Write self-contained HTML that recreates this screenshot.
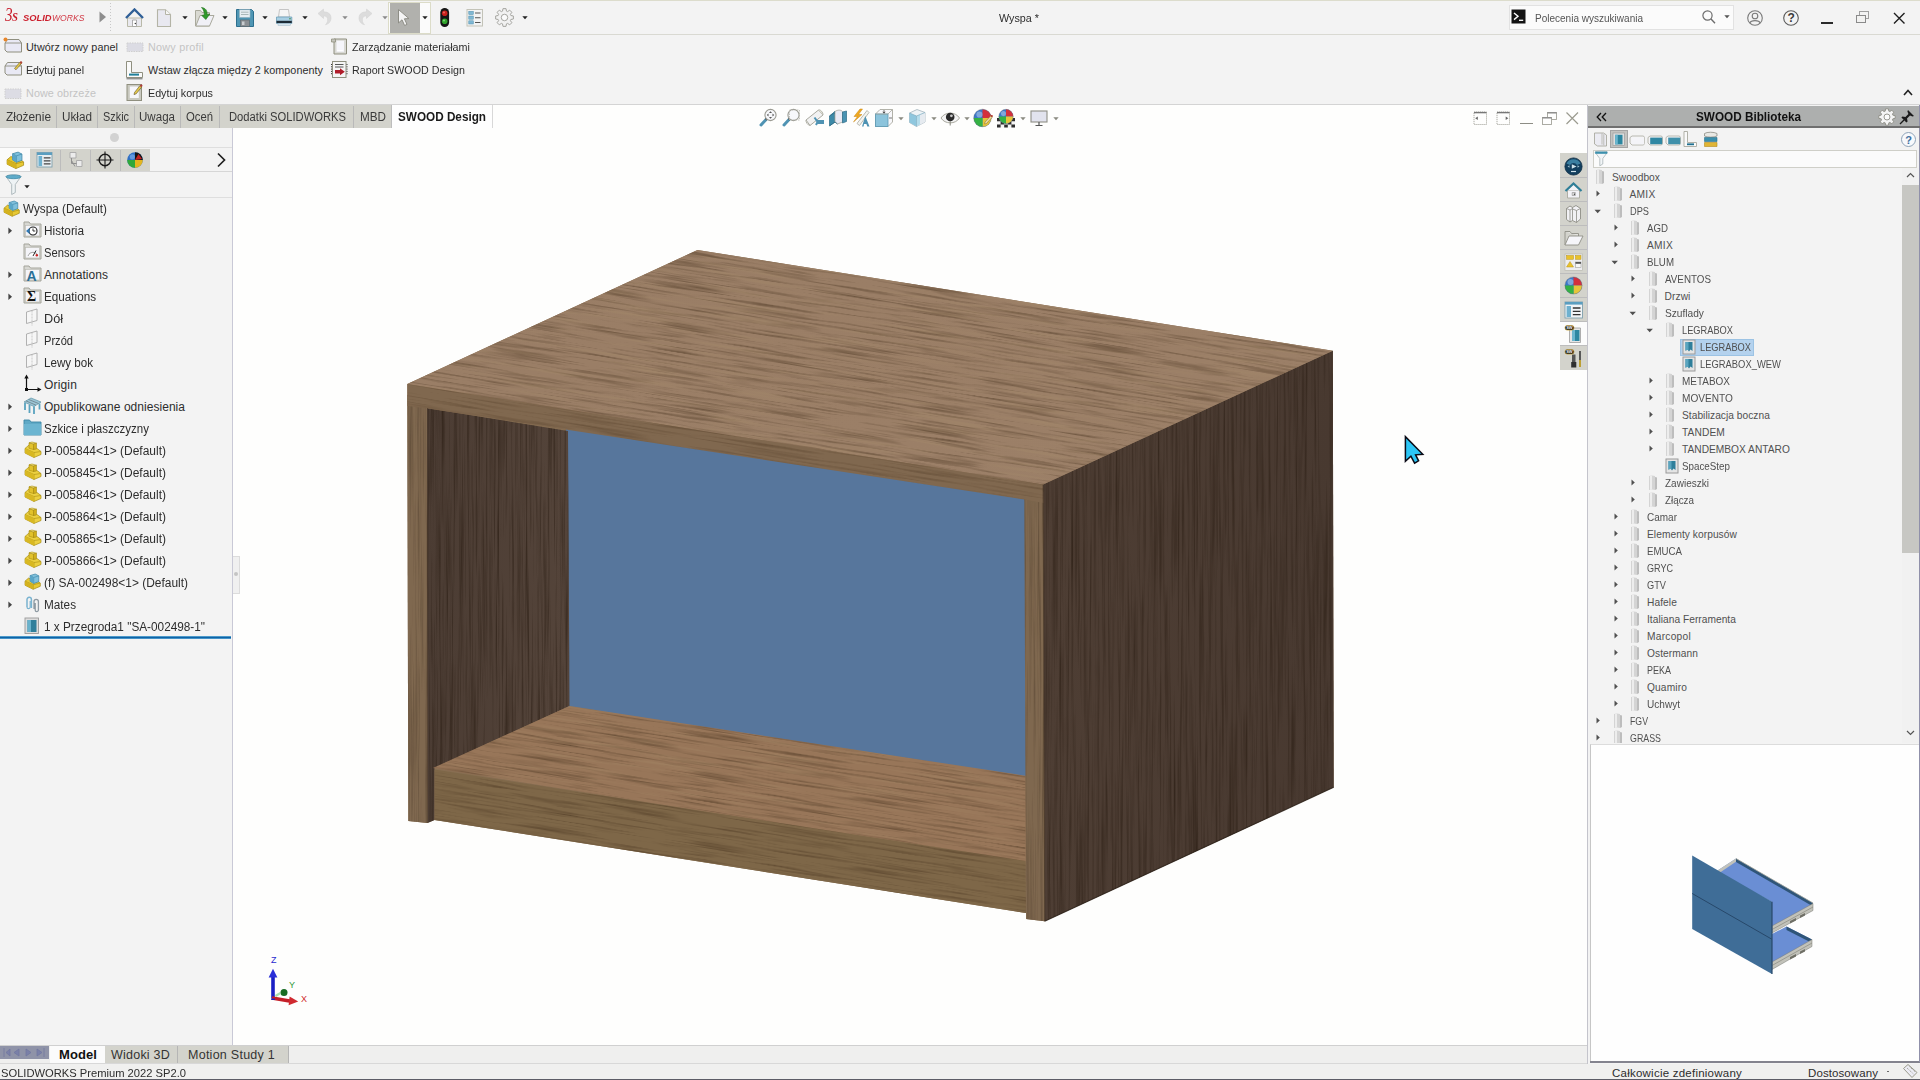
<!DOCTYPE html>
<html lang="pl"><head><meta charset="utf-8"><title>Wyspa - SOLIDWORKS Premium 2022</title><style>
html,body{margin:0;padding:0;}
body{width:1920px;height:1080px;overflow:hidden;position:relative;background:#fefefd;font-family:"Liberation Sans",sans-serif;}
.b{position:absolute;display:block;}
.t{position:absolute;white-space:nowrap;line-height:16px;height:16px;}
</style></head><body>
<div class="b" style="left:0px;top:0px;width:1920px;height:105px;background:#f3f3f3;"></div>
<div class="b" style="left:0px;top:34px;width:1920px;height:1px;background:#d9d9d2;"></div>
<div class="b" style="left:0px;top:0px;width:1920px;height:1px;background:#dcdccc;"></div>
<div class="b" style="left:0px;top:104px;width:1920px;height:1px;background:#d4d4d4;"></div>
<div class="b" style="left:0px;top:105px;width:391px;height:23px;background:#d3d3cc;"></div>
<div class="b" style="left:56px;top:106px;width:1px;height:22px;background:#b9b9b9;"></div>
<div class="b" style="left:97px;top:106px;width:1px;height:22px;background:#b9b9b9;"></div>
<div class="b" style="left:134px;top:106px;width:1px;height:22px;background:#b9b9b9;"></div>
<div class="b" style="left:180px;top:106px;width:1px;height:22px;background:#b9b9b9;"></div>
<div class="b" style="left:219px;top:106px;width:1px;height:22px;background:#b9b9b9;"></div>
<div class="b" style="left:353px;top:106px;width:1px;height:22px;background:#b9b9b9;"></div>
<div class="b" style="left:391px;top:105px;width:102px;height:23px;background:#fefefe;border-left:1px solid #bdbdbd;border-right:1px solid #d8d8d8;box-sizing:border-box;"></div>
<div class="b" style="left:0px;top:128px;width:232px;height:917px;background:#f3f3f3;"></div>
<div class="b" style="left:232px;top:128px;width:1px;height:917px;background:#c9c9d6;"></div>
<div class="b" style="left:0px;top:147px;width:232px;height:1px;background:#dedede;"></div>
<div class="b" style="left:0px;top:148px;width:30px;height:23px;background:#fbfbfb;"></div>
<div class="b" style="left:30px;top:149px;width:120px;height:22px;background:#d3d3cc;"></div>
<div class="b" style="left:60px;top:150px;width:1px;height:21px;background:#bcbcbc;"></div>
<div class="b" style="left:90px;top:150px;width:1px;height:21px;background:#bcbcbc;"></div>
<div class="b" style="left:120px;top:150px;width:1px;height:21px;background:#bcbcbc;"></div>
<div class="b" style="left:0px;top:171px;width:232px;height:1px;background:#d6d6d6;"></div>
<div class="b" style="left:0px;top:197px;width:232px;height:1px;background:#dedede;"></div>
<div class="b" style="left:0px;top:636.3px;width:231px;height:3.2px;background:linear-gradient(#8fd6f0,#0e62a6 32%,#0e62a6 68%,#7cc8ec);"></div>
<div class="b" style="left:110px;top:133px;width:9px;height:9px;background:#d2d2d2;border-radius:50%;"></div>
<div class="b" style="left:233px;top:556px;width:7px;height:38px;background:#f0f0f0;border:1px solid #dcdcdc;border-left:none;box-sizing:border-box;"></div>
<div class="b" style="left:234px;top:572px;width:4px;height:4px;background:#c4c4c4;border-radius:50%;"></div>
<div class="b" style="left:1587px;top:105px;width:333px;height:960px;background:#f3f3f3;"></div>
<div class="b" style="left:1587px;top:105px;width:1px;height:960px;background:#c4c4cc;"></div>
<div class="b" style="left:1588px;top:106px;width:332px;height:22px;background:#adafae;"></div>
<div class="b" style="left:1593px;top:149.5px;width:324px;height:18px;background:#fbfbfb;border:1px solid #cfcfc8;box-sizing:border-box;"></div>
<div class="b" style="left:1597px;top:168px;width:305px;height:575px;background:#f3f3f3;"></div>
<div class="b" style="left:1902px;top:168px;width:17px;height:575px;background:#f1f1f1;"></div>
<div class="b" style="left:1902px;top:185px;width:17px;height:368px;background:#c7c7c3;"></div>
<div class="b" style="left:1590px;top:744px;width:330px;height:318px;background:#fefefe;border-left:1px solid #c6c6c6;border-top:1px solid #dcdcdc;box-sizing:border-box;"></div>
<div class="b" style="left:1590px;top:1061px;width:330px;height:1.8px;background:#83838e;"></div>
<div class="b" style="left:1919px;top:105px;width:1px;height:957px;background:#9090aa;"></div>
<div class="b" style="left:1560px;top:153px;width:27px;height:217px;background:#d3d3cc;"></div>
<div class="b" style="left:1560px;top:177px;width:27px;height:1px;background:#bdbdbd;"></div>
<div class="b" style="left:1560px;top:201px;width:27px;height:1px;background:#bdbdbd;"></div>
<div class="b" style="left:1560px;top:225px;width:27px;height:1px;background:#bdbdbd;"></div>
<div class="b" style="left:1560px;top:249px;width:27px;height:1px;background:#bdbdbd;"></div>
<div class="b" style="left:1560px;top:273px;width:27px;height:1px;background:#bdbdbd;"></div>
<div class="b" style="left:1560px;top:297px;width:27px;height:1px;background:#bdbdbd;"></div>
<div class="b" style="left:1560px;top:321px;width:27px;height:1px;background:#bdbdbd;"></div>
<div class="b" style="left:1560px;top:345px;width:27px;height:1px;background:#bdbdbd;"></div>
<div class="b" style="left:1560px;top:322px;width:27px;height:23px;background:#fcfcfc;"></div>
<div class="b" style="left:0px;top:1045px;width:1587px;height:19px;background:#efefee;"></div>
<div class="b" style="left:0px;top:1045px;width:1587px;height:1px;background:#d0d0d0;"></div>
<div class="b" style="left:0px;top:1046px;width:49px;height:13px;background:#8f93a8;"></div>
<div class="b" style="left:50px;top:1046px;width:55px;height:18px;background:#fbfbfb;"></div>
<div class="b" style="left:105px;top:1046px;width:73px;height:17px;background:#d3d3cc;border-right:1px solid #b5b5b5;box-sizing:border-box;"></div>
<div class="b" style="left:178px;top:1046px;width:111px;height:17px;background:#d3d3cc;border-right:1px solid #b5b5b5;box-sizing:border-box;"></div>
<div class="b" style="left:0px;top:1064px;width:1920px;height:16px;background:#f0f0ef;"></div>
<div class="b" style="left:0px;top:1063px;width:1587px;height:1px;background:#d8d8d8;"></div>
<div class="b" style="left:0px;top:1079px;width:1920px;height:1px;background:#5c5c66;"></div>
<span class="t" style="left:999px;top:10px;font-size:11.5px;color:#2d2d2d;transform:scaleX(0.9364);transform-origin:0 50%;">Wyspa *</span>
<div class="b" style="left:1509px;top:5px;width:225px;height:25px;background:#fbfbfb;border:1px solid #e2e2e2;box-sizing:border-box;"></div>
<span class="t" style="left:1535px;top:10px;font-size:11px;color:#555;transform:scaleX(0.9105);transform-origin:0 50%;">Polecenia wyszukiwania</span>
<span class="t" style="left:26px;top:39px;font-size:10.8px;color:#2d2d2d;letter-spacing:0.045px;">Utwórz nowy panel</span>
<span class="t" style="left:26px;top:62px;font-size:10.8px;color:#2d2d2d;transform:scaleX(0.9758);transform-origin:0 50%;">Edytuj panel</span>
<span class="t" style="left:26px;top:85px;font-size:10.8px;color:#c4c4c4;letter-spacing:0.081px;">Nowe obrzeże</span>
<span class="t" style="left:148px;top:39px;font-size:10.8px;color:#c4c4c4;letter-spacing:0.235px;">Nowy profil</span>
<span class="t" style="left:148px;top:62px;font-size:10.8px;color:#2d2d2d;letter-spacing:0.029px;">Wstaw złącza między 2 komponenty</span>
<span class="t" style="left:148px;top:85px;font-size:10.8px;color:#2d2d2d;transform:scaleX(0.9934);transform-origin:0 50%;">Edytuj korpus</span>
<span class="t" style="left:352px;top:39px;font-size:10.8px;color:#2d2d2d;transform:scaleX(0.9980);transform-origin:0 50%;">Zarządzanie materiałami</span>
<span class="t" style="left:352px;top:62px;font-size:10.8px;color:#2d2d2d;transform:scaleX(0.9910);transform-origin:0 50%;">Raport SWOOD Design</span>
<span class="t" style="left:6px;top:108.6px;font-size:12px;color:#3a3a3a;transform:scaleX(0.9922);transform-origin:0 50%;">Złożenie</span>
<span class="t" style="left:62px;top:108.6px;font-size:12px;color:#3a3a3a;transform:scaleX(0.9779);transform-origin:0 50%;">Układ</span>
<span class="t" style="left:103px;top:108.6px;font-size:12px;color:#3a3a3a;transform:scaleX(0.9069);transform-origin:0 50%;">Szkic</span>
<span class="t" style="left:139px;top:108.6px;font-size:12px;color:#3a3a3a;transform:scaleX(0.9638);transform-origin:0 50%;">Uwaga</span>
<span class="t" style="left:186px;top:108.6px;font-size:12px;color:#3a3a3a;transform:scaleX(0.9414);transform-origin:0 50%;">Oceń</span>
<span class="t" style="left:229px;top:108.6px;font-size:12px;color:#3a3a3a;transform:scaleX(0.9333);transform-origin:0 50%;">Dodatki SOLIDWORKS</span>
<span class="t" style="left:360px;top:108.6px;font-size:12px;color:#3a3a3a;transform:scaleX(0.9750);transform-origin:0 50%;">MBD</span>
<span class="t" style="left:398px;top:108.6px;font-size:12px;color:#1a1a1a;transform:scaleX(0.9777);transform-origin:0 50%;font-weight:700;">SWOOD Design</span>
<span class="t" style="left:23px;top:200.5px;font-size:12px;color:#2d2d2d;transform:scaleX(0.9777);transform-origin:0 50%;">Wyspa (Default)</span>
<span class="t" style="left:44px;top:222.5px;font-size:12px;color:#2d2d2d;transform:scaleX(0.9834);transform-origin:0 50%;">Historia</span>
<span class="t" style="left:44px;top:244.5px;font-size:12px;color:#2d2d2d;transform:scaleX(0.9314);transform-origin:0 50%;">Sensors</span>
<span class="t" style="left:44px;top:266.5px;font-size:12px;color:#2d2d2d;letter-spacing:0.057px;">Annotations</span>
<span class="t" style="left:44px;top:288.5px;font-size:12px;color:#2d2d2d;transform:scaleX(0.9743);transform-origin:0 50%;">Equations</span>
<span class="t" style="left:44px;top:310.5px;font-size:12px;color:#2d2d2d;transform:scaleX(1.0552);transform-origin:0 50%;">Dół</span>
<span class="t" style="left:44px;top:332.5px;font-size:12px;color:#2d2d2d;transform:scaleX(0.9252);transform-origin:0 50%;">Przód</span>
<span class="t" style="left:44px;top:354.5px;font-size:12px;color:#2d2d2d;transform:scaleX(0.9666);transform-origin:0 50%;">Lewy bok</span>
<span class="t" style="left:44px;top:376.5px;font-size:12px;color:#2d2d2d;letter-spacing:0.165px;">Origin</span>
<span class="t" style="left:44px;top:398.5px;font-size:12px;color:#2d2d2d;letter-spacing:0.038px;">Opublikowane odniesienia</span>
<span class="t" style="left:44px;top:420.5px;font-size:12px;color:#2d2d2d;transform:scaleX(0.9601);transform-origin:0 50%;">Szkice i płaszczyzny</span>
<span class="t" style="left:44px;top:442.5px;font-size:12px;color:#2d2d2d;transform:scaleX(0.9994);transform-origin:0 50%;">P-005844&lt;1&gt; (Default)</span>
<span class="t" style="left:44px;top:464.5px;font-size:12px;color:#2d2d2d;transform:scaleX(0.9994);transform-origin:0 50%;">P-005845&lt;1&gt; (Default)</span>
<span class="t" style="left:44px;top:486.5px;font-size:12px;color:#2d2d2d;transform:scaleX(0.9994);transform-origin:0 50%;">P-005846&lt;1&gt; (Default)</span>
<span class="t" style="left:44px;top:508.5px;font-size:12px;color:#2d2d2d;transform:scaleX(0.9994);transform-origin:0 50%;">P-005864&lt;1&gt; (Default)</span>
<span class="t" style="left:44px;top:530.5px;font-size:12px;color:#2d2d2d;transform:scaleX(0.9994);transform-origin:0 50%;">P-005865&lt;1&gt; (Default)</span>
<span class="t" style="left:44px;top:552.5px;font-size:12px;color:#2d2d2d;transform:scaleX(0.9994);transform-origin:0 50%;">P-005866&lt;1&gt; (Default)</span>
<span class="t" style="left:44px;top:574.5px;font-size:12px;color:#2d2d2d;transform:scaleX(0.9949);transform-origin:0 50%;">(f) SA-002498&lt;1&gt; (Default)</span>
<span class="t" style="left:44px;top:596.5px;font-size:12px;color:#2d2d2d;transform:scaleX(0.9793);transform-origin:0 50%;">Mates</span>
<span class="t" style="left:44px;top:618.5px;font-size:12px;color:#2d2d2d;transform:scaleX(0.9821);transform-origin:0 50%;">1 x Przegroda1 "SA-002498-1"</span>
<span class="t" style="left:59px;top:1047.3px;font-size:13px;color:#111;letter-spacing:0.090px;font-weight:700;">Model</span>
<span class="t" style="left:111px;top:1047.3px;font-size:12.5px;color:#333;letter-spacing:0.227px;">Widoki 3D</span>
<span class="t" style="left:188px;top:1047.3px;font-size:12.5px;color:#333;letter-spacing:0.259px;">Motion Study 1</span>
<span class="t" style="left:1px;top:1064.7px;font-size:11.5px;color:#2d2d2d;transform:scaleX(0.9714);transform-origin:0 50%;">SOLIDWORKS Premium 2022 SP2.0</span>
<span class="t" style="left:1612px;top:1064.7px;font-size:11.5px;color:#2d2d2d;letter-spacing:0.233px;">Całkowicie zdefiniowany</span>
<span class="t" style="left:1808px;top:1064.7px;font-size:11.5px;color:#2d2d2d;letter-spacing:0.088px;">Dostosowany</span>
<span class="t" style="left:1696px;top:109px;font-size:12.5px;color:#111;transform:scaleX(0.9391);transform-origin:0 50%;font-weight:700;">SWOOD Biblioteka</span>
<div class="b" style="left:1590px;top:168px;width:312px;height:575px;overflow:hidden;">
<span class="t" style="left:22px;top:2px;font-size:10.2px;color:#505050;letter-spacing:0.046px;">Swoodbox</span>
<svg class="b" style="left:4px;top:1px;" width="12" height="16" viewBox="0 0 12 16"><path d="M2 1 L5 0.5 L8 1 L8 15 L5 14.5 L2 15 Z" fill="#d4d4d4"/><path d="M3 1 L5 0.5 L5 14.5 L3 15 Z" fill="#ededed"/><path d="M8 2 L10 2.5 L10 14 L8 15 Z" fill="#bdbdbd"/></svg>
<span class="t" style="left:39.5px;top:19px;font-size:10.2px;color:#505050;letter-spacing:0.266px;">AMIX</span>
<svg class="b" style="left:21.5px;top:18px;" width="12" height="16" viewBox="0 0 12 16"><path d="M2 1 L5 0.5 L8 1 L8 15 L5 14.5 L2 15 Z" fill="#d4d4d4"/><path d="M3 1 L5 0.5 L5 14.5 L3 15 Z" fill="#ededed"/><path d="M8 2 L10 2.5 L10 14 L8 15 Z" fill="#bdbdbd"/></svg>
<svg class="b" style="left:6px;top:22px;" width="5" height="8" viewBox="0 0 5 8"><path d="M0.5 0.5 L3.8 3.5 L0.5 6.5 Z" fill="#505050"/></svg>
<span class="t" style="left:39.5px;top:36px;font-size:10.2px;color:#505050;transform:scaleX(0.9059);transform-origin:0 50%;">DPS</span>
<svg class="b" style="left:21.5px;top:35px;" width="12" height="16" viewBox="0 0 12 16"><path d="M2 1 L5 0.5 L8 1 L8 15 L5 14.5 L2 15 Z" fill="#d4d4d4"/><path d="M3 1 L5 0.5 L5 14.5 L3 15 Z" fill="#ededed"/><path d="M8 2 L10 2.5 L10 14 L8 15 Z" fill="#bdbdbd"/></svg>
<svg class="b" style="left:3.5px;top:40.5px;" width="8" height="5" viewBox="0 0 8 5"><path d="M0.5 0.8 L6.9 0.8 L3.7 4.2 Z" fill="#505050"/></svg>
<span class="t" style="left:57px;top:53px;font-size:10.2px;color:#505050;transform:scaleX(0.9501);transform-origin:0 50%;">AGD</span>
<svg class="b" style="left:39px;top:52px;" width="12" height="16" viewBox="0 0 12 16"><path d="M2 1 L5 0.5 L8 1 L8 15 L5 14.5 L2 15 Z" fill="#d4d4d4"/><path d="M3 1 L5 0.5 L5 14.5 L3 15 Z" fill="#ededed"/><path d="M8 2 L10 2.5 L10 14 L8 15 Z" fill="#bdbdbd"/></svg>
<svg class="b" style="left:23.5px;top:56px;" width="5" height="8" viewBox="0 0 5 8"><path d="M0.5 0.5 L3.8 3.5 L0.5 6.5 Z" fill="#505050"/></svg>
<span class="t" style="left:57px;top:70px;font-size:10.2px;color:#505050;letter-spacing:0.266px;">AMIX</span>
<svg class="b" style="left:39px;top:69px;" width="12" height="16" viewBox="0 0 12 16"><path d="M2 1 L5 0.5 L8 1 L8 15 L5 14.5 L2 15 Z" fill="#d4d4d4"/><path d="M3 1 L5 0.5 L5 14.5 L3 15 Z" fill="#ededed"/><path d="M8 2 L10 2.5 L10 14 L8 15 Z" fill="#bdbdbd"/></svg>
<svg class="b" style="left:23.5px;top:73px;" width="5" height="8" viewBox="0 0 5 8"><path d="M0.5 0.5 L3.8 3.5 L0.5 6.5 Z" fill="#505050"/></svg>
<span class="t" style="left:57px;top:87px;font-size:10.2px;color:#505050;transform:scaleX(0.9528);transform-origin:0 50%;">BLUM</span>
<svg class="b" style="left:39px;top:86px;" width="12" height="16" viewBox="0 0 12 16"><path d="M2 1 L5 0.5 L8 1 L8 15 L5 14.5 L2 15 Z" fill="#d4d4d4"/><path d="M3 1 L5 0.5 L5 14.5 L3 15 Z" fill="#ededed"/><path d="M8 2 L10 2.5 L10 14 L8 15 Z" fill="#bdbdbd"/></svg>
<svg class="b" style="left:21px;top:91.5px;" width="8" height="5" viewBox="0 0 8 5"><path d="M0.5 0.8 L6.9 0.8 L3.7 4.2 Z" fill="#505050"/></svg>
<span class="t" style="left:74.5px;top:104px;font-size:10.2px;color:#505050;transform:scaleX(0.9623);transform-origin:0 50%;">AVENTOS</span>
<svg class="b" style="left:56.5px;top:103px;" width="12" height="16" viewBox="0 0 12 16"><path d="M2 1 L5 0.5 L8 1 L8 15 L5 14.5 L2 15 Z" fill="#d4d4d4"/><path d="M3 1 L5 0.5 L5 14.5 L3 15 Z" fill="#ededed"/><path d="M8 2 L10 2.5 L10 14 L8 15 Z" fill="#bdbdbd"/></svg>
<svg class="b" style="left:41px;top:107px;" width="5" height="8" viewBox="0 0 5 8"><path d="M0.5 0.5 L3.8 3.5 L0.5 6.5 Z" fill="#505050"/></svg>
<span class="t" style="left:74.5px;top:121px;font-size:10.2px;color:#505050;letter-spacing:0.101px;">Drzwi</span>
<svg class="b" style="left:56.5px;top:120px;" width="12" height="16" viewBox="0 0 12 16"><path d="M2 1 L5 0.5 L8 1 L8 15 L5 14.5 L2 15 Z" fill="#d4d4d4"/><path d="M3 1 L5 0.5 L5 14.5 L3 15 Z" fill="#ededed"/><path d="M8 2 L10 2.5 L10 14 L8 15 Z" fill="#bdbdbd"/></svg>
<svg class="b" style="left:41px;top:124px;" width="5" height="8" viewBox="0 0 5 8"><path d="M0.5 0.5 L3.8 3.5 L0.5 6.5 Z" fill="#505050"/></svg>
<span class="t" style="left:74.5px;top:138px;font-size:10.2px;color:#505050;transform:scaleX(0.9969);transform-origin:0 50%;">Szuflady</span>
<svg class="b" style="left:56.5px;top:137px;" width="12" height="16" viewBox="0 0 12 16"><path d="M2 1 L5 0.5 L8 1 L8 15 L5 14.5 L2 15 Z" fill="#d4d4d4"/><path d="M3 1 L5 0.5 L5 14.5 L3 15 Z" fill="#ededed"/><path d="M8 2 L10 2.5 L10 14 L8 15 Z" fill="#bdbdbd"/></svg>
<svg class="b" style="left:38.5px;top:142.5px;" width="8" height="5" viewBox="0 0 8 5"><path d="M0.5 0.8 L6.9 0.8 L3.7 4.2 Z" fill="#505050"/></svg>
<span class="t" style="left:92px;top:155px;font-size:10.2px;color:#505050;transform:scaleX(0.9088);transform-origin:0 50%;">LEGRABOX</span>
<svg class="b" style="left:74px;top:154px;" width="12" height="16" viewBox="0 0 12 16"><path d="M2 1 L5 0.5 L8 1 L8 15 L5 14.5 L2 15 Z" fill="#d4d4d4"/><path d="M3 1 L5 0.5 L5 14.5 L3 15 Z" fill="#ededed"/><path d="M8 2 L10 2.5 L10 14 L8 15 Z" fill="#bdbdbd"/></svg>
<svg class="b" style="left:56px;top:159.5px;" width="8" height="5" viewBox="0 0 8 5"><path d="M0.5 0.8 L6.9 0.8 L3.7 4.2 Z" fill="#505050"/></svg>
<div class="b" style="left:89.5px;top:170.5px;width:74px;height:17.5px;background:#b4d2ee;border:1px solid #9cc3e4;box-sizing:border-box;"></div>
<span class="t" style="left:109.5px;top:172px;font-size:10.2px;color:#505050;transform:scaleX(0.9088);transform-origin:0 50%;">LEGRABOX</span>
<svg class="b" style="left:92px;top:171px;" width="14" height="16" viewBox="0 0 14 16"><rect x="1" y="1" width="12" height="14" fill="#e4e4e4" stroke="#9a9a9a"/><path d="M3.5 3 H10.5 V12 L8.5 10.5 L7 12.5 L5.5 10.5 L3.5 12 Z" fill="#2f7f9b"/><rect x="3.5" y="3" width="3" height="8" fill="#5aa5bf"/></svg>
<span class="t" style="left:109.5px;top:189px;font-size:10.2px;color:#505050;transform:scaleX(0.9220);transform-origin:0 50%;">LEGRABOX_WEW</span>
<svg class="b" style="left:92px;top:188px;" width="14" height="16" viewBox="0 0 14 16"><rect x="1" y="1" width="12" height="14" fill="#e4e4e4" stroke="#9a9a9a"/><path d="M3.5 3 H10.5 V12 L8.5 10.5 L7 12.5 L5.5 10.5 L3.5 12 Z" fill="#2f7f9b"/><rect x="3.5" y="3" width="3" height="8" fill="#5aa5bf"/></svg>
<span class="t" style="left:92px;top:206px;font-size:10.2px;color:#505050;transform:scaleX(0.9772);transform-origin:0 50%;">METABOX</span>
<svg class="b" style="left:74px;top:205px;" width="12" height="16" viewBox="0 0 12 16"><path d="M2 1 L5 0.5 L8 1 L8 15 L5 14.5 L2 15 Z" fill="#d4d4d4"/><path d="M3 1 L5 0.5 L5 14.5 L3 15 Z" fill="#ededed"/><path d="M8 2 L10 2.5 L10 14 L8 15 Z" fill="#bdbdbd"/></svg>
<svg class="b" style="left:58.5px;top:209px;" width="5" height="8" viewBox="0 0 5 8"><path d="M0.5 0.5 L3.8 3.5 L0.5 6.5 Z" fill="#505050"/></svg>
<span class="t" style="left:92px;top:223px;font-size:10.2px;color:#505050;transform:scaleX(0.9926);transform-origin:0 50%;">MOVENTO</span>
<svg class="b" style="left:74px;top:222px;" width="12" height="16" viewBox="0 0 12 16"><path d="M2 1 L5 0.5 L8 1 L8 15 L5 14.5 L2 15 Z" fill="#d4d4d4"/><path d="M3 1 L5 0.5 L5 14.5 L3 15 Z" fill="#ededed"/><path d="M8 2 L10 2.5 L10 14 L8 15 Z" fill="#bdbdbd"/></svg>
<svg class="b" style="left:58.5px;top:226px;" width="5" height="8" viewBox="0 0 5 8"><path d="M0.5 0.5 L3.8 3.5 L0.5 6.5 Z" fill="#505050"/></svg>
<span class="t" style="left:92px;top:240px;font-size:10.2px;color:#505050;letter-spacing:0.036px;">Stabilizacja boczna</span>
<svg class="b" style="left:74px;top:239px;" width="12" height="16" viewBox="0 0 12 16"><path d="M2 1 L5 0.5 L8 1 L8 15 L5 14.5 L2 15 Z" fill="#d4d4d4"/><path d="M3 1 L5 0.5 L5 14.5 L3 15 Z" fill="#ededed"/><path d="M8 2 L10 2.5 L10 14 L8 15 Z" fill="#bdbdbd"/></svg>
<svg class="b" style="left:58.5px;top:243px;" width="5" height="8" viewBox="0 0 5 8"><path d="M0.5 0.5 L3.8 3.5 L0.5 6.5 Z" fill="#505050"/></svg>
<span class="t" style="left:92px;top:257px;font-size:10.2px;color:#505050;letter-spacing:0.115px;">TANDEM</span>
<svg class="b" style="left:74px;top:256px;" width="12" height="16" viewBox="0 0 12 16"><path d="M2 1 L5 0.5 L8 1 L8 15 L5 14.5 L2 15 Z" fill="#d4d4d4"/><path d="M3 1 L5 0.5 L5 14.5 L3 15 Z" fill="#ededed"/><path d="M8 2 L10 2.5 L10 14 L8 15 Z" fill="#bdbdbd"/></svg>
<svg class="b" style="left:58.5px;top:260px;" width="5" height="8" viewBox="0 0 5 8"><path d="M0.5 0.5 L3.8 3.5 L0.5 6.5 Z" fill="#505050"/></svg>
<span class="t" style="left:92px;top:274px;font-size:10.2px;color:#505050;letter-spacing:0.008px;">TANDEMBOX ANTARO</span>
<svg class="b" style="left:74px;top:273px;" width="12" height="16" viewBox="0 0 12 16"><path d="M2 1 L5 0.5 L8 1 L8 15 L5 14.5 L2 15 Z" fill="#d4d4d4"/><path d="M3 1 L5 0.5 L5 14.5 L3 15 Z" fill="#ededed"/><path d="M8 2 L10 2.5 L10 14 L8 15 Z" fill="#bdbdbd"/></svg>
<svg class="b" style="left:58.5px;top:277px;" width="5" height="8" viewBox="0 0 5 8"><path d="M0.5 0.5 L3.8 3.5 L0.5 6.5 Z" fill="#505050"/></svg>
<span class="t" style="left:92px;top:291px;font-size:10.2px;color:#505050;transform:scaleX(0.9619);transform-origin:0 50%;">SpaceStep</span>
<svg class="b" style="left:74.5px;top:290px;" width="14" height="16" viewBox="0 0 14 16"><rect x="1" y="1" width="12" height="14" fill="#e4e4e4" stroke="#9a9a9a"/><path d="M3.5 3 H10.5 V12 L8.5 10.5 L7 12.5 L5.5 10.5 L3.5 12 Z" fill="#2f7f9b"/><rect x="3.5" y="3" width="3" height="8" fill="#5aa5bf"/></svg>
<span class="t" style="left:74.5px;top:308px;font-size:10.2px;color:#505050;transform:scaleX(0.9827);transform-origin:0 50%;">Zawieszki</span>
<svg class="b" style="left:56.5px;top:307px;" width="12" height="16" viewBox="0 0 12 16"><path d="M2 1 L5 0.5 L8 1 L8 15 L5 14.5 L2 15 Z" fill="#d4d4d4"/><path d="M3 1 L5 0.5 L5 14.5 L3 15 Z" fill="#ededed"/><path d="M8 2 L10 2.5 L10 14 L8 15 Z" fill="#bdbdbd"/></svg>
<svg class="b" style="left:41px;top:311px;" width="5" height="8" viewBox="0 0 5 8"><path d="M0.5 0.5 L3.8 3.5 L0.5 6.5 Z" fill="#505050"/></svg>
<span class="t" style="left:74.5px;top:325px;font-size:10.2px;color:#505050;transform:scaleX(0.9654);transform-origin:0 50%;">Złącza</span>
<svg class="b" style="left:56.5px;top:324px;" width="12" height="16" viewBox="0 0 12 16"><path d="M2 1 L5 0.5 L8 1 L8 15 L5 14.5 L2 15 Z" fill="#d4d4d4"/><path d="M3 1 L5 0.5 L5 14.5 L3 15 Z" fill="#ededed"/><path d="M8 2 L10 2.5 L10 14 L8 15 Z" fill="#bdbdbd"/></svg>
<svg class="b" style="left:41px;top:328px;" width="5" height="8" viewBox="0 0 5 8"><path d="M0.5 0.5 L3.8 3.5 L0.5 6.5 Z" fill="#505050"/></svg>
<span class="t" style="left:57px;top:342px;font-size:10.2px;color:#505050;transform:scaleX(0.9803);transform-origin:0 50%;">Camar</span>
<svg class="b" style="left:39px;top:341px;" width="12" height="16" viewBox="0 0 12 16"><path d="M2 1 L5 0.5 L8 1 L8 15 L5 14.5 L2 15 Z" fill="#d4d4d4"/><path d="M3 1 L5 0.5 L5 14.5 L3 15 Z" fill="#ededed"/><path d="M8 2 L10 2.5 L10 14 L8 15 Z" fill="#bdbdbd"/></svg>
<svg class="b" style="left:23.5px;top:345px;" width="5" height="8" viewBox="0 0 5 8"><path d="M0.5 0.5 L3.8 3.5 L0.5 6.5 Z" fill="#505050"/></svg>
<span class="t" style="left:57px;top:359px;font-size:10.2px;color:#505050;letter-spacing:0.059px;">Elementy korpusów</span>
<svg class="b" style="left:39px;top:358px;" width="12" height="16" viewBox="0 0 12 16"><path d="M2 1 L5 0.5 L8 1 L8 15 L5 14.5 L2 15 Z" fill="#d4d4d4"/><path d="M3 1 L5 0.5 L5 14.5 L3 15 Z" fill="#ededed"/><path d="M8 2 L10 2.5 L10 14 L8 15 Z" fill="#bdbdbd"/></svg>
<svg class="b" style="left:23.5px;top:362px;" width="5" height="8" viewBox="0 0 5 8"><path d="M0.5 0.5 L3.8 3.5 L0.5 6.5 Z" fill="#505050"/></svg>
<span class="t" style="left:57px;top:376px;font-size:10.2px;color:#505050;transform:scaleX(0.9501);transform-origin:0 50%;">EMUCA</span>
<svg class="b" style="left:39px;top:375px;" width="12" height="16" viewBox="0 0 12 16"><path d="M2 1 L5 0.5 L8 1 L8 15 L5 14.5 L2 15 Z" fill="#d4d4d4"/><path d="M3 1 L5 0.5 L5 14.5 L3 15 Z" fill="#ededed"/><path d="M8 2 L10 2.5 L10 14 L8 15 Z" fill="#bdbdbd"/></svg>
<svg class="b" style="left:23.5px;top:379px;" width="5" height="8" viewBox="0 0 5 8"><path d="M0.5 0.5 L3.8 3.5 L0.5 6.5 Z" fill="#505050"/></svg>
<span class="t" style="left:57px;top:393px;font-size:10.2px;color:#505050;transform:scaleX(0.8878);transform-origin:0 50%;">GRYC</span>
<svg class="b" style="left:39px;top:392px;" width="12" height="16" viewBox="0 0 12 16"><path d="M2 1 L5 0.5 L8 1 L8 15 L5 14.5 L2 15 Z" fill="#d4d4d4"/><path d="M3 1 L5 0.5 L5 14.5 L3 15 Z" fill="#ededed"/><path d="M8 2 L10 2.5 L10 14 L8 15 Z" fill="#bdbdbd"/></svg>
<svg class="b" style="left:23.5px;top:396px;" width="5" height="8" viewBox="0 0 5 8"><path d="M0.5 0.5 L3.8 3.5 L0.5 6.5 Z" fill="#505050"/></svg>
<span class="t" style="left:57px;top:410px;font-size:10.2px;color:#505050;transform:scaleX(0.9062);transform-origin:0 50%;">GTV</span>
<svg class="b" style="left:39px;top:409px;" width="12" height="16" viewBox="0 0 12 16"><path d="M2 1 L5 0.5 L8 1 L8 15 L5 14.5 L2 15 Z" fill="#d4d4d4"/><path d="M3 1 L5 0.5 L5 14.5 L3 15 Z" fill="#ededed"/><path d="M8 2 L10 2.5 L10 14 L8 15 Z" fill="#bdbdbd"/></svg>
<svg class="b" style="left:23.5px;top:413px;" width="5" height="8" viewBox="0 0 5 8"><path d="M0.5 0.5 L3.8 3.5 L0.5 6.5 Z" fill="#505050"/></svg>
<span class="t" style="left:57px;top:427px;font-size:10.2px;color:#505050;letter-spacing:0.086px;">Hafele</span>
<svg class="b" style="left:39px;top:426px;" width="12" height="16" viewBox="0 0 12 16"><path d="M2 1 L5 0.5 L8 1 L8 15 L5 14.5 L2 15 Z" fill="#d4d4d4"/><path d="M3 1 L5 0.5 L5 14.5 L3 15 Z" fill="#ededed"/><path d="M8 2 L10 2.5 L10 14 L8 15 Z" fill="#bdbdbd"/></svg>
<svg class="b" style="left:23.5px;top:430px;" width="5" height="8" viewBox="0 0 5 8"><path d="M0.5 0.5 L3.8 3.5 L0.5 6.5 Z" fill="#505050"/></svg>
<span class="t" style="left:57px;top:444px;font-size:10.2px;color:#505050;letter-spacing:0.030px;">Italiana Ferramenta</span>
<svg class="b" style="left:39px;top:443px;" width="12" height="16" viewBox="0 0 12 16"><path d="M2 1 L5 0.5 L8 1 L8 15 L5 14.5 L2 15 Z" fill="#d4d4d4"/><path d="M3 1 L5 0.5 L5 14.5 L3 15 Z" fill="#ededed"/><path d="M8 2 L10 2.5 L10 14 L8 15 Z" fill="#bdbdbd"/></svg>
<svg class="b" style="left:23.5px;top:447px;" width="5" height="8" viewBox="0 0 5 8"><path d="M0.5 0.5 L3.8 3.5 L0.5 6.5 Z" fill="#505050"/></svg>
<span class="t" style="left:57px;top:461px;font-size:10.2px;color:#505050;letter-spacing:0.257px;">Marcopol</span>
<svg class="b" style="left:39px;top:460px;" width="12" height="16" viewBox="0 0 12 16"><path d="M2 1 L5 0.5 L8 1 L8 15 L5 14.5 L2 15 Z" fill="#d4d4d4"/><path d="M3 1 L5 0.5 L5 14.5 L3 15 Z" fill="#ededed"/><path d="M8 2 L10 2.5 L10 14 L8 15 Z" fill="#bdbdbd"/></svg>
<svg class="b" style="left:23.5px;top:464px;" width="5" height="8" viewBox="0 0 5 8"><path d="M0.5 0.5 L3.8 3.5 L0.5 6.5 Z" fill="#505050"/></svg>
<span class="t" style="left:57px;top:478px;font-size:10.2px;color:#505050;letter-spacing:0.061px;">Ostermann</span>
<svg class="b" style="left:39px;top:477px;" width="12" height="16" viewBox="0 0 12 16"><path d="M2 1 L5 0.5 L8 1 L8 15 L5 14.5 L2 15 Z" fill="#d4d4d4"/><path d="M3 1 L5 0.5 L5 14.5 L3 15 Z" fill="#ededed"/><path d="M8 2 L10 2.5 L10 14 L8 15 Z" fill="#bdbdbd"/></svg>
<svg class="b" style="left:23.5px;top:481px;" width="5" height="8" viewBox="0 0 5 8"><path d="M0.5 0.5 L3.8 3.5 L0.5 6.5 Z" fill="#505050"/></svg>
<span class="t" style="left:57px;top:495px;font-size:10.2px;color:#505050;transform:scaleX(0.8819);transform-origin:0 50%;">PEKA</span>
<svg class="b" style="left:39px;top:494px;" width="12" height="16" viewBox="0 0 12 16"><path d="M2 1 L5 0.5 L8 1 L8 15 L5 14.5 L2 15 Z" fill="#d4d4d4"/><path d="M3 1 L5 0.5 L5 14.5 L3 15 Z" fill="#ededed"/><path d="M8 2 L10 2.5 L10 14 L8 15 Z" fill="#bdbdbd"/></svg>
<svg class="b" style="left:23.5px;top:498px;" width="5" height="8" viewBox="0 0 5 8"><path d="M0.5 0.5 L3.8 3.5 L0.5 6.5 Z" fill="#505050"/></svg>
<span class="t" style="left:57px;top:512px;font-size:10.2px;color:#505050;letter-spacing:0.127px;">Quamiro</span>
<svg class="b" style="left:39px;top:511px;" width="12" height="16" viewBox="0 0 12 16"><path d="M2 1 L5 0.5 L8 1 L8 15 L5 14.5 L2 15 Z" fill="#d4d4d4"/><path d="M3 1 L5 0.5 L5 14.5 L3 15 Z" fill="#ededed"/><path d="M8 2 L10 2.5 L10 14 L8 15 Z" fill="#bdbdbd"/></svg>
<svg class="b" style="left:23.5px;top:515px;" width="5" height="8" viewBox="0 0 5 8"><path d="M0.5 0.5 L3.8 3.5 L0.5 6.5 Z" fill="#505050"/></svg>
<span class="t" style="left:57px;top:529px;font-size:10.2px;color:#505050;transform:scaleX(0.9869);transform-origin:0 50%;">Uchwyt</span>
<svg class="b" style="left:39px;top:528px;" width="12" height="16" viewBox="0 0 12 16"><path d="M2 1 L5 0.5 L8 1 L8 15 L5 14.5 L2 15 Z" fill="#d4d4d4"/><path d="M3 1 L5 0.5 L5 14.5 L3 15 Z" fill="#ededed"/><path d="M8 2 L10 2.5 L10 14 L8 15 Z" fill="#bdbdbd"/></svg>
<svg class="b" style="left:23.5px;top:532px;" width="5" height="8" viewBox="0 0 5 8"><path d="M0.5 0.5 L3.8 3.5 L0.5 6.5 Z" fill="#505050"/></svg>
<span class="t" style="left:39.5px;top:546px;font-size:10.2px;color:#505050;transform:scaleX(0.8585);transform-origin:0 50%;">FGV</span>
<svg class="b" style="left:21.5px;top:545px;" width="12" height="16" viewBox="0 0 12 16"><path d="M2 1 L5 0.5 L8 1 L8 15 L5 14.5 L2 15 Z" fill="#d4d4d4"/><path d="M3 1 L5 0.5 L5 14.5 L3 15 Z" fill="#ededed"/><path d="M8 2 L10 2.5 L10 14 L8 15 Z" fill="#bdbdbd"/></svg>
<svg class="b" style="left:6px;top:549px;" width="5" height="8" viewBox="0 0 5 8"><path d="M0.5 0.5 L3.8 3.5 L0.5 6.5 Z" fill="#505050"/></svg>
<span class="t" style="left:39.5px;top:563px;font-size:10.2px;color:#505050;transform:scaleX(0.8681);transform-origin:0 50%;">GRASS</span>
<svg class="b" style="left:21.5px;top:562px;" width="12" height="16" viewBox="0 0 12 16"><path d="M2 1 L5 0.5 L8 1 L8 15 L5 14.5 L2 15 Z" fill="#d4d4d4"/><path d="M3 1 L5 0.5 L5 14.5 L3 15 Z" fill="#ededed"/><path d="M8 2 L10 2.5 L10 14 L8 15 Z" fill="#bdbdbd"/></svg>
<svg class="b" style="left:6px;top:566px;" width="5" height="8" viewBox="0 0 5 8"><path d="M0.5 0.5 L3.8 3.5 L0.5 6.5 Z" fill="#505050"/></svg>
</div>
<svg class="b" style="left:0px;top:0px;" width="1920" height="1080" viewBox="0 0 1920 1080"><defs>
<filter color-interpolation-filters="sRGB" id="gh" x="0" y="0" width="100%" height="100%"><feTurbulence type="fractalNoise" baseFrequency="0.012 0.45" numOctaves="4" seed="4"/><feColorMatrix type="matrix" values="0 0 0 0 0.28  0 0 0 0 0.2  0 0 0 0 0.12  1.3 0 0 0 -0.60"/></filter>
<filter color-interpolation-filters="sRGB" id="gl" x="0" y="0" width="100%" height="100%"><feTurbulence type="fractalNoise" baseFrequency="0.010 0.3" numOctaves="3" seed="9"/><feColorMatrix type="matrix" values="0 0 0 0 0.66  0 0 0 0 0.56  0 0 0 0 0.42  1.0 0 0 0 -0.52"/></filter>
<filter color-interpolation-filters="sRGB" id="gv" x="0" y="0" width="100%" height="100%"><feTurbulence type="fractalNoise" baseFrequency="0.5 0.006" numOctaves="4" seed="7"/><feColorMatrix type="matrix" values="0 0 0 0 0.14  0 0 0 0 0.09  0 0 0 0 0.05  1.4 0 0 0 -0.62"/></filter>
<clipPath id="ctop"><polygon points="407.3,384 697.5,250 1332.8,350.7 1043.1,484.6"/></clipPath>
<clipPath id="cright"><polygon points="1043.1,484.6 1332.8,350.7 1333.7,787.3 1044.7,921.2"/></clipPath>
<clipPath id="cil"><polygon points="426.5,408 568,431 569.5,706 434.5,768 434.5,820 427.5,823"/></clipPath>
<clipPath id="cbt"><polygon points="433,768 569.5,706 1025.5,776 1025.5,861"/></clipPath>
<clipPath id="cbf"><polygon points="434.5,769.5 1025.7,861 1026,913 434.5,820"/></clipPath>
<clipPath id="ctf"><polygon points="407.3,384 1043.1,484.6 1043.3,503 1024.3,499.5 426,408.3 407.4,406"/></clipPath>
<clipPath id="clf"><polygon points="407.3,395 427,400 427.5,823 408.3,821"/></clipPath>
<clipPath id="crf"><polygon points="1024.3,490 1043.2,492 1044.7,921.2 1026,919"/></clipPath>
<linearGradient id="gtop" x1="0" y1="0" x2="1" y2="1"><stop offset="0" stop-color="#997d65"/><stop offset="1" stop-color="#9c8068"/></linearGradient>
<linearGradient id="gright" x1="0" y1="0" x2="1" y2="0"><stop offset="0" stop-color="#4e3e34"/><stop offset="1" stop-color="#483930"/></linearGradient>
<linearGradient id="gil" x1="0" y1="0" x2="1" y2="0"><stop offset="0" stop-color="#4b3c33"/><stop offset="1" stop-color="#54443a"/></linearGradient>
</defs><polygon points="407.3,384 697.5,250 1332.8,350.7 1333.7,787.3 1044.7,921.2 1026,919 1026,913 434.5,820 427.5,823 408.3,821" fill="#876e52"/><polygon points="566,428 1026,497 1027,779 567,708" fill="#57769c"/><polygon points="426.5,408 568,431 569.5,706 434.5,768 434.5,820 427.5,823" fill="url(#gil)"/><g clip-path="url(#cil)"><rect x="420" y="400" width="160" height="430" filter="url(#gv)"/></g><polygon points="433,768 569.5,706 1027,776 1027,863" fill="#987659"/><g clip-path="url(#cbt)"><g transform="translate(430,690) skewY(8.9)"><rect x="0" y="-10" width="610" height="100" filter="url(#gh)"/><rect x="0" y="-10" width="610" height="100" filter="url(#gl)"/></g></g><polygon points="434.5,769.5 1025.7,861 1026,913 434.5,820" fill="#7e6748"/><g clip-path="url(#cbf)"><g transform="translate(430,760) skewY(8.9)"><rect x="0" y="0" width="610" height="70" filter="url(#gh)"/></g></g><polygon points="1043.1,484.6 1332.8,350.7 1333.7,787.3 1044.7,921.2" fill="url(#gright)"/><g clip-path="url(#cright)"><g transform="translate(1040,480) skewY(-24.8)"><rect x="0" y="0" width="300" height="450" filter="url(#gv)"/></g></g><polygon points="407.3,384 697.5,250 1332.8,350.7 1043.1,484.6" fill="url(#gtop)"/><g clip-path="url(#ctop)"><g transform="translate(400,240) skewY(9)"><rect x="0" y="-160" width="950" height="320" filter="url(#gh)"/><rect x="0" y="-160" width="950" height="320" filter="url(#gl)"/></g></g><polygon points="407.3,395 427,400 427.5,823 408.3,821" fill="#7f684f"/><g clip-path="url(#clf)"><rect x="405" y="390" width="26" height="440" filter="url(#gv)" opacity="0.5"/></g><polygon points="1024.3,490 1043.2,492 1044.7,921.2 1026,919" fill="#7f684f"/><g clip-path="url(#crf)"><rect x="1022" y="485" width="26" height="440" filter="url(#gv)" opacity="0.5"/></g><polygon points="407.3,384 1043.1,484.6 1043.3,503 1024.3,499.5 426,408.3 407.4,406" fill="#80684f"/><g clip-path="url(#ctf)"><g transform="translate(400,380) skewY(9)"><rect x="0" y="0" width="650" height="30" filter="url(#gh)" opacity="0.7"/></g></g><path d="M1043.1 484.6 L1044.7 921.2" stroke="#3a2c20" stroke-width="1" opacity="0.6"/><path d="M1044.7 921.2 L1333.7 787.3" stroke="#2a2018" stroke-width="1.2" opacity="0.8"/><path d="M427.5 408 L427.5 823" stroke="#4a392b" stroke-width="1" opacity="0.5"/></svg>
<span class="t" style="left:4.5px;top:4.5px;font-size:19px;line-height:20px;height:20px;color:#c8202e;font-style:italic;font-weight:400;transform:scaleX(0.8);transform-origin:0 50%;font-family:'Liberation Serif',serif;">3</span>
<span class="t" style="left:11.5px;top:9px;font-size:12.5px;line-height:16px;color:#c8202e;font-style:italic;font-weight:700;transform:scaleX(0.85);transform-origin:0 50%;font-family:'Liberation Serif',serif;">S</span>
<span class="t" style="left:23.4px;top:9.5px;font-size:9.8px;color:#cc1f2d;font-style:italic;font-weight:700;transform:scaleX(0.955);transform-origin:0 50%;">SOLID</span>
<span class="t" style="left:52px;top:9.5px;font-size:9.8px;color:#d23c48;font-style:italic;font-weight:400;transform:scaleX(0.875);transform-origin:0 50%;">WORKS</span>
<svg class="b" style="left:99px;top:11px;" width="8" height="12" viewBox="0 0 8 12"><path d="M0.5 0.5 L7 6 L0.5 11.5 Z" fill="#8d8d8d"/></svg>
<div class="b" style="left:110px;top:3px;width:1px;height:1px;background:#c8c8c8;"></div>
<div class="b" style="left:110px;top:6px;width:1px;height:1px;background:#c8c8c8;"></div>
<div class="b" style="left:110px;top:9px;width:1px;height:1px;background:#c8c8c8;"></div>
<div class="b" style="left:110px;top:12px;width:1px;height:1px;background:#c8c8c8;"></div>
<div class="b" style="left:110px;top:15px;width:1px;height:1px;background:#c8c8c8;"></div>
<div class="b" style="left:110px;top:18px;width:1px;height:1px;background:#c8c8c8;"></div>
<div class="b" style="left:110px;top:21px;width:1px;height:1px;background:#c8c8c8;"></div>
<div class="b" style="left:110px;top:24px;width:1px;height:1px;background:#c8c8c8;"></div>
<div class="b" style="left:110px;top:27px;width:1px;height:1px;background:#c8c8c8;"></div>
<div class="b" style="left:110px;top:30px;width:1px;height:1px;background:#c8c8c8;"></div>
<svg class="b" style="left:125px;top:8px;" width="20" height="20" viewBox="0 0 20 20"><path d="M2.5 10 H16.5 V18.5 H2.5 Z" fill="#e9e9ef" stroke="#b9b9a8" stroke-width="1"/><path d="M7.5 12 H11.5 V18.5 H7.5 Z" fill="#fff" stroke="#9c9c9c" stroke-width="0.8"/><circle cx="10.3" cy="15.5" r="0.7" fill="#333"/><path d="M1 10 L9.5 1.5 L18 10" fill="none" stroke="#2f5f97" stroke-width="2.4" stroke-linejoin="miter"/></svg>
<svg class="b" style="left:156px;top:8px;" width="16" height="20" viewBox="0 0 16 20"><path d="M1.5 1.8 H9.5 L14.5 6.5 V18.5 H1.5 Z" fill="#e8e8f0" stroke="#b4b4a6" stroke-width="1.1"/><path d="M9.5 1.8 V6.5 H14.5" fill="#f6f6f6" stroke="#b4b4a6" stroke-width="1"/></svg>
<svg class="b" style="left:181.5px;top:15.5px;" width="6" height="4" viewBox="0 0 6 4"><path d="M0.3 0.3 H5.7 L3 3.3 Z" fill="#222"/></svg>
<svg class="b" style="left:194px;top:6px;" width="22" height="22" viewBox="0 0 22 22"><path d="M1.5 4.5 H6.5 L8 6.5 H15.5 V20 H1.5 Z" fill="#d9d9d2" stroke="#a9a99c" stroke-width="1"/><path d="M1.8 20 L6 9.5 H20 L15.5 20 Z" fill="#f0f0f6" stroke="#a9a99c" stroke-width="1"/><path d="M7.5 1.5 C11.5 2 13.5 4.5 13 8.5 L15.8 8 L11.8 13.5 L7.8 9.5 L10.3 9 C10.5 6 9.5 3.5 7.5 1.5 Z" fill="#2f9a2a" stroke="#1e6f1a" stroke-width="0.6"/></svg>
<svg class="b" style="left:221.5px;top:15.5px;" width="6" height="4" viewBox="0 0 6 4"><path d="M0.3 0.3 H5.7 L3 3.3 Z" fill="#222"/></svg>
<svg class="b" style="left:235px;top:8px;" width="20" height="20" viewBox="0 0 20 20"><path d="M1.5 1.5 H16.5 L18.5 3.5 V18.5 H1.5 Z" fill="#4f96b4" stroke="#2d6f8e" stroke-width="1"/><rect x="4.5" y="1.8" width="10.5" height="7.5" fill="#e6eef2" stroke="#9db8c4" stroke-width="0.6"/><path d="M6 4.2 H13.5 M6 6.5 H13.5" stroke="#9aa" stroke-width="0.8"/><rect x="5.5" y="12" width="9" height="6.5" fill="#8b8f93" stroke="#5f6468" stroke-width="0.6"/><rect x="7" y="13.5" width="2.5" height="3.5" fill="#c9cdd0"/></svg>
<svg class="b" style="left:261.5px;top:15.5px;" width="6" height="4" viewBox="0 0 6 4"><path d="M0.3 0.3 H5.7 L3 3.3 Z" fill="#222"/></svg>
<svg class="b" style="left:275px;top:8px;" width="20" height="20" viewBox="0 0 20 20"><path d="M4.5 1.5 H13.5 L14.5 9 H3.5 Z" fill="#f5f5f5" stroke="#b9b9b9" stroke-width="0.8"/><path d="M1.5 9 H16.8 V15.5 H1.5 Z" fill="#a9cfe3" stroke="#6d9fb9" stroke-width="0.8"/><rect x="1.5" y="12.8" width="15.3" height="2.2" fill="#1c2b36"/><rect x="3" y="15.5" width="12.5" height="2" fill="#d8e6ee" stroke="#9db8c8" stroke-width="0.5"/><circle cx="15" cy="10.8" r="0.7" fill="#2a7d2a"/></svg>
<svg class="b" style="left:301.5px;top:15.5px;" width="6" height="4" viewBox="0 0 6 4"><path d="M0.3 0.3 H5.7 L3 3.3 Z" fill="#222"/></svg>
<svg class="b" style="left:316px;top:8px;" width="18" height="18" viewBox="0 0 18 18"><path d="M2 5.5 L7.5 1 V3.8 C13 3.8 15.5 7 15 11 C14.6 14 12.5 16 9.5 16.8 C11.5 14.5 12 12.5 11.5 10.5 C11 8.5 9.5 8 7.5 8 V10.5 Z" fill="#dcdcdc" stroke="#d0d0d0" stroke-width="0.5"/></svg>
<svg class="b" style="left:341.5px;top:15.5px;" width="6" height="4" viewBox="0 0 6 4"><path d="M0.3 0.3 H5.7 L3 3.3 Z" fill="#8a8a8a"/></svg>
<svg class="b" style="left:356px;top:8px;" width="18" height="18" viewBox="0 0 18 18"><g transform="translate(18,0) scale(-1,1)"><path d="M2 5.5 L7.5 1 V3.8 C13 3.8 15.5 7 15 11 C14.6 14 12.5 16 9.5 16.8 C11.5 14.5 12 12.5 11.5 10.5 C11 8.5 9.5 8 7.5 8 V10.5 Z" fill="#dcdcdc" stroke="#d0d0d0" stroke-width="0.5"/></g></svg>
<svg class="b" style="left:381.5px;top:15.5px;" width="6" height="4" viewBox="0 0 6 4"><path d="M0.3 0.3 H5.7 L3 3.3 Z" fill="#8a8a8a"/></svg>
<div class="b" style="left:388px;top:1.5px;width:42.5px;height:32px;background:#fbfbfb;border:1px solid #dcdcc8;box-sizing:border-box;"></div>
<div class="b" style="left:389.7px;top:2.5px;width:30.3px;height:30px;background:#b1b1ad;"></div>
<svg class="b" style="left:397px;top:8px;" width="14" height="20" viewBox="0 0 14 20"><path d="M1.5 1.5 V15 L5 11.8 L7.6 17.5 L10 16.4 L7.4 10.8 L12 10.6 Z" fill="#f4f4f4" stroke="#8e8e86" stroke-width="1"/></svg>
<svg class="b" style="left:421.5px;top:15.5px;" width="6" height="4" viewBox="0 0 6 4"><path d="M0.3 0.3 H5.7 L3 3.3 Z" fill="#222"/></svg>
<svg class="b" style="left:438.5px;top:7px;" width="12" height="22" viewBox="0 0 12 22"><rect x="1.3" y="1" width="8.8" height="19" rx="4.4" fill="#151515"/><circle cx="5.7" cy="6.3" r="2.8" fill="#c8201c"/><circle cx="5.7" cy="14.3" r="2.8" fill="#2ea32a"/><circle cx="5" cy="5.5" r="1" fill="#e96a60"/><circle cx="5" cy="13.5" r="1" fill="#7fd67a"/></svg>
<svg class="b" style="left:466px;top:8px;" width="18" height="20" viewBox="0 0 18 20"><rect x="1" y="1.5" width="15.5" height="16.5" fill="#f3f3f3" stroke="#c3c3b8" stroke-width="1"/><rect x="2.8" y="3.3" width="4.5" height="3.2" fill="#7fb7d3" stroke="#4c8eae" stroke-width="0.5"/><rect x="2.8" y="8" width="4.5" height="3.2" fill="#7fb7d3" stroke="#4c8eae" stroke-width="0.5"/><rect x="2.8" y="12.8" width="4.5" height="3.2" fill="#7fb7d3" stroke="#4c8eae" stroke-width="0.5"/><path d="M9 5 H14.5 M9 9.7 H14.5 M9 14.5 H14.5" stroke="#555" stroke-width="1.1"/></svg>
<svg class="b" style="left:494px;top:7px;" width="22" height="22" viewBox="0 0 22 22"><path d="M16.86 8.53 L19.37 8.98 L19.37 12.02 L16.86 12.47 L16.39 13.61 L17.85 15.70 L15.70 17.85 L13.61 16.39 L12.47 16.86 L12.02 19.37 L8.98 19.37 L8.53 16.86 L7.39 16.39 L5.30 17.85 L3.15 15.70 L4.61 13.61 L4.14 12.47 L1.63 12.02 L1.63 8.98 L4.14 8.53 L4.61 7.39 L3.15 5.30 L5.30 3.15 L7.39 4.61 L8.53 4.14 L8.98 1.63 L12.02 1.63 L12.47 4.14 L13.61 4.61 L15.70 3.15 L17.85 5.30 L16.39 7.39 Z" fill="#f1f1f1" stroke="#a5a5a0" stroke-width="1" stroke-linejoin="round"/><circle cx="10.5" cy="10.5" r="3.24" fill="#fbfbfb" stroke="#a5a5a0" stroke-width="1"/></svg>
<svg class="b" style="left:521.5px;top:15.5px;" width="6" height="4" viewBox="0 0 6 4"><path d="M0.3 0.3 H5.7 L3 3.3 Z" fill="#222"/></svg>
<svg class="b" style="left:1511px;top:9px;" width="16" height="16" viewBox="0 0 16 16"><rect x="0.5" y="0.5" width="14" height="14" fill="#141414"/><path d="M3 4 L7 7.3 L3 10.6" fill="none" stroke="#fff" stroke-width="1.4"/><path d="M8 11.3 H12.2" stroke="#fff" stroke-width="1.3"/></svg>
<svg class="b" style="left:1701px;top:9px;" width="16" height="16" viewBox="0 0 16 16"><circle cx="6.5" cy="6.5" r="4.6" fill="none" stroke="#6c6c6c" stroke-width="1.2"/><path d="M9.8 9.8 L14 14.2" stroke="#6c6c6c" stroke-width="1.4"/></svg>
<svg class="b" style="left:1724px;top:15px;" width="6" height="4" viewBox="0 0 6 4"><path d="M0.3 0.3 H5.7 L3 3.3 Z" fill="#555"/></svg>
<svg class="b" style="left:1746px;top:9px;" width="18" height="18" viewBox="0 0 18 18"><circle cx="9" cy="9" r="7.3" fill="none" stroke="#7a7a7a" stroke-width="1.1"/><circle cx="9" cy="7" r="2.8" fill="none" stroke="#7a7a7a" stroke-width="1.1"/><path d="M3.8 14 C5 10.8 13 10.8 14.2 14" fill="none" stroke="#7a7a7a" stroke-width="1.1"/></svg>
<svg class="b" style="left:1782px;top:9px;" width="18" height="18" viewBox="0 0 18 18"><circle cx="9" cy="9" r="7.3" fill="none" stroke="#5a5a5a" stroke-width="1.1"/></svg>
<span class="t" style="left:1787.5px;top:10px;font-size:12px;font-weight:700;color:#3a3a3a;">?</span>
<div class="b" style="left:1821px;top:22px;width:12px;height:2px;background:#2a2a2a;"></div>
<svg class="b" style="left:1855px;top:10px;" width="16" height="16" viewBox="0 0 16 16"><rect x="4.5" y="1.5" width="9" height="7" fill="none" stroke="#a0a0a0" stroke-width="1"/><rect x="1.5" y="5.5" width="9" height="7" fill="#f2f2f1" stroke="#8a8a8a" stroke-width="1"/></svg>
<svg class="b" style="left:1893px;top:12px;" width="13" height="13" viewBox="0 0 13 13"><path d="M1 1 L11.5 11.5 M11.5 1 L1 11.5" stroke="#1e1e1e" stroke-width="1.4"/></svg>
<svg class="b" style="left:1903px;top:89px;" width="10" height="7" viewBox="0 0 10 7"><path d="M1 6 L5 1.5 L9 6" fill="none" stroke="#222" stroke-width="1.6"/></svg>
<svg class="b" style="left:3.5px;top:38px;" width="19" height="16" viewBox="0 0 19 16"><path d="M1 5 L3.5 1.5 H15 L17.5 5 V14 H3 L1 12 Z" fill="#e9e9f4" stroke="#8f8f7f" stroke-width="1"/><path d="M1 5 H17.5" fill="none" stroke="#8f8f7f" stroke-width="0.9"/></svg>
<svg class="b" style="left:3px;top:37px;" width="5" height="5" viewBox="0 0 5 5"><circle cx="2.5" cy="2.5" r="2" fill="#e8862a"/></svg>
<svg class="b" style="left:3.5px;top:61px;" width="19" height="16" viewBox="0 0 19 16"><path d="M1 5 L3.5 1.5 H15 L17.5 5 V14 H3 L1 12 Z" fill="#e9e9f4" stroke="#8f8f7f" stroke-width="1"/><path d="M1 5 H17.5" fill="none" stroke="#8f8f7f" stroke-width="0.9"/><path d="M10.5 7.5 L16 1 L17.6 2.4 L12 8.8 Z" fill="#e3c84a" stroke="#6b5a2a" stroke-width="0.6"/><circle cx="17" cy="1.5" r="1.2" fill="#b0453a"/></svg>
<svg class="b" style="left:4px;top:87px;" width="19" height="14" viewBox="0 0 19 14"><rect x="1" y="2" width="16" height="9.5" fill="#dcdce4" stroke="#cfcfcf" stroke-width="1" stroke-dasharray="1.5 1"/></svg>
<svg class="b" style="left:126px;top:41px;" width="19" height="13" viewBox="0 0 19 13"><rect x="1" y="2" width="16" height="8.5" fill="#dcdce4" stroke="#cfcfcf" stroke-width="1" stroke-dasharray="1.5 1"/></svg>
<svg class="b" style="left:125px;top:60px;" width="20" height="20" viewBox="0 0 20 20"><path d="M1.5 1.5 H6.5 V12.5 H17.5 V17.5 H1.5 Z" fill="#fafafa" stroke="#8f8f7f" stroke-width="1"/><rect x="4" y="13.6" width="10" height="2" fill="#1f7f9a"/><path d="M1.5 18.8 H17.5" stroke="#444" stroke-width="0.8"/></svg>
<svg class="b" style="left:126px;top:83px;" width="18" height="19" viewBox="0 0 18 19"><rect x="1" y="1.5" width="14.5" height="16" fill="#c9c9c0" stroke="#8f8f7f" stroke-width="1"/><rect x="3.8" y="3.5" width="9" height="11.5" fill="#f7f7fb"/><path d="M8.5 9.5 L14 2.5 L15.8 3.9 L10.2 10.8 L8 11.6 Z" fill="#e3c84a" stroke="#5f5028" stroke-width="0.6"/><circle cx="15.2" cy="2.6" r="1.2" fill="#b03a3a"/></svg>
<svg class="b" style="left:330px;top:37px;" width="19" height="19" viewBox="0 0 19 19"><path d="M4 2 H16.5 V17 H4 Z" fill="#d9d9d4" stroke="#8f8f7f" stroke-width="1"/><rect x="6.5" y="3.8" width="7.5" height="11" fill="#f5f5fa"/><path d="M1.5 2 H5.5 V5 H1.5 Z" fill="#c4c4bc" stroke="#8f8f7f" stroke-width="0.8"/><path d="M7 13.5 H13" stroke="#fff" stroke-width="1"/></svg>
<svg class="b" style="left:330px;top:60px;" width="19" height="19" viewBox="0 0 19 19"><rect x="2.5" y="1.5" width="13.5" height="16" fill="#f5f5f5" stroke="#8f8f7f" stroke-width="1"/><path d="M5 4.5 H13.5 M5 7 H13.5" stroke="#555" stroke-width="1.1"/><path d="M5 10 H10 V8.3 L14.8 11.8 L10 15.3 V13.6 H5 Z" fill="#b01c2a"/><path d="M1.5 4 V15.5 M17 4 V15.5" stroke="#333" stroke-width="1" stroke-dasharray="1 1.3"/></svg>
<svg class="b" style="left:6px;top:151px;" width="18.7" height="18.7" viewBox="0 0 17 17"><path d="M1 8 L4.5 5 L8 6.5 L8 9 L13 7.5 L16 10 L16 13 L9 16 L1 12 Z" fill="#e8c933" stroke="#a58a12" stroke-width="0.7"/><path d="M1 8 L9 11.5 L16 9.8 M9 11.5 V16" fill="none" stroke="#a58a12" stroke-width="0.6"/><path d="M1 8 L9 11.5 V16 L1 12 Z" fill="#d4b21e"/><path d="M6 2.5 L11 1 L14.5 2.8 V8.5 L9.5 10.3 L6 8.2 Z" fill="#7fc0dc" stroke="#3f86a6" stroke-width="0.7"/><path d="M6 2.5 L9.5 4.4 L14.5 2.8 M9.5 4.4 V10.3" fill="none" stroke="#3f86a6" stroke-width="0.6"/><path d="M6 2.5 L9.5 4.4 V10.3 L6 8.2 Z" fill="#5aa6c8"/></svg>
<svg class="b" style="left:36px;top:151px;" width="18" height="18" viewBox="0 0 18 18"><rect x="1" y="1.5" width="15" height="14.5" fill="#e9eef1" stroke="#7f9fae" stroke-width="0.9"/><rect x="1" y="1.5" width="15" height="2.5" fill="#5a9ec0"/><rect x="2.5" y="5" width="3.6" height="10" fill="#6fb1cf"/><path d="M7.8 6.8 H14.5 M7.8 9.8 H14.5 M7.8 12.8 H14.5" stroke="#444" stroke-width="1.2"/></svg>
<svg class="b" style="left:66px;top:151px;" width="18" height="18" viewBox="0 0 18 18"><path d="M4 1.5 H10 V7 H4 Z M10.5 9.5 H16 V15.5 H10.5 Z" fill="#ececec" stroke="#a8a8a8" stroke-width="0.9"/><path d="M5.5 7 V12.5 H10.5 M5.5 9.5 L9 15.5" fill="none" stroke="#8f8f8f" stroke-width="1"/></svg>
<svg class="b" style="left:96px;top:151px;" width="18" height="18" viewBox="0 0 18 18"><circle cx="9" cy="9" r="5.8" fill="none" stroke="#1a1a1a" stroke-width="1.4"/><path d="M9 0.5 V17.5 M0.5 9 H17.5" stroke="#1a1a1a" stroke-width="1.1"/></svg>
<svg class="b" style="left:126px;top:151px;" width="18" height="18" viewBox="0 0 18 18"><circle cx="9" cy="9" r="7.8" fill="#2f6fc4"/><path d="M9 9 L9 1.2 A7.8 7.8 0 0 1 16.8 9 Z" fill="#141414"/><path d="M9 9 H16.8 A7.8 7.8 0 0 1 9 16.8 Z" fill="#e3b51f"/><path d="M9 9 V16.8 A7.8 7.8 0 0 1 1.2 9 Z" fill="#2fa83a"/><path d="M9 9 L12.5 3 L16 8 Z" fill="#c32222"/><circle cx="6.3" cy="5.8" r="2.6" fill="#6fa4e6" opacity="0.8"/></svg>
<svg class="b" style="left:216px;top:152px;" width="10" height="16" viewBox="0 0 10 16"><path d="M2 1.5 L8.5 8 L2 14.5" fill="none" stroke="#1f1f1f" stroke-width="1.7"/></svg>
<svg class="b" style="left:5px;top:174px;" width="18" height="22" viewBox="0 0 18 22"><path d="M1 2.5 C1 0.5 16 0.5 16 2.5 L10.3 10.5 V18.5 L6.7 20.5 V10.5 Z" fill="#eef3f5" stroke="#a9b4b8" stroke-width="0.9"/><ellipse cx="8.5" cy="2.8" rx="7.5" ry="1.9" fill="#5eabc9" stroke="#3b86a5" stroke-width="0.7"/></svg>
<svg class="b" style="left:23.5px;top:184.5px;" width="6" height="4" viewBox="0 0 6 4"><path d="M0.3 0.3 H5.7 L3 3.3 Z" fill="#222"/></svg>
<svg class="b" style="left:3px;top:199.5px;" width="17.34" height="17.34" viewBox="0 0 17 17"><path d="M1 8 L4.5 5 L8 6.5 L8 9 L13 7.5 L16 10 L16 13 L9 16 L1 12 Z" fill="#e8c933" stroke="#a58a12" stroke-width="0.7"/><path d="M1 8 L9 11.5 L16 9.8 M9 11.5 V16" fill="none" stroke="#a58a12" stroke-width="0.6"/><path d="M1 8 L9 11.5 V16 L1 12 Z" fill="#d4b21e"/><path d="M6 2.5 L11 1 L14.5 2.8 V8.5 L9.5 10.3 L6 8.2 Z" fill="#7fc0dc" stroke="#3f86a6" stroke-width="0.7"/><path d="M6 2.5 L9.5 4.4 L14.5 2.8 M9.5 4.4 V10.3" fill="none" stroke="#3f86a6" stroke-width="0.6"/><path d="M6 2.5 L9.5 4.4 V10.3 L6 8.2 Z" fill="#5aa6c8"/></svg>
<svg class="b" style="left:8px;top:226.5px;" width="5" height="8" viewBox="0 0 5 8"><path d="M0.4 0.6 L4 3.8 L0.4 7 Z" fill="#444"/></svg>
<svg class="b" style="left:8px;top:270.5px;" width="5" height="8" viewBox="0 0 5 8"><path d="M0.4 0.6 L4 3.8 L0.4 7 Z" fill="#444"/></svg>
<svg class="b" style="left:8px;top:292.5px;" width="5" height="8" viewBox="0 0 5 8"><path d="M0.4 0.6 L4 3.8 L0.4 7 Z" fill="#444"/></svg>
<svg class="b" style="left:8px;top:402.5px;" width="5" height="8" viewBox="0 0 5 8"><path d="M0.4 0.6 L4 3.8 L0.4 7 Z" fill="#444"/></svg>
<svg class="b" style="left:8px;top:424.5px;" width="5" height="8" viewBox="0 0 5 8"><path d="M0.4 0.6 L4 3.8 L0.4 7 Z" fill="#444"/></svg>
<svg class="b" style="left:8px;top:446.5px;" width="5" height="8" viewBox="0 0 5 8"><path d="M0.4 0.6 L4 3.8 L0.4 7 Z" fill="#444"/></svg>
<svg class="b" style="left:8px;top:468.5px;" width="5" height="8" viewBox="0 0 5 8"><path d="M0.4 0.6 L4 3.8 L0.4 7 Z" fill="#444"/></svg>
<svg class="b" style="left:8px;top:490.5px;" width="5" height="8" viewBox="0 0 5 8"><path d="M0.4 0.6 L4 3.8 L0.4 7 Z" fill="#444"/></svg>
<svg class="b" style="left:8px;top:512.5px;" width="5" height="8" viewBox="0 0 5 8"><path d="M0.4 0.6 L4 3.8 L0.4 7 Z" fill="#444"/></svg>
<svg class="b" style="left:8px;top:534.5px;" width="5" height="8" viewBox="0 0 5 8"><path d="M0.4 0.6 L4 3.8 L0.4 7 Z" fill="#444"/></svg>
<svg class="b" style="left:8px;top:556.5px;" width="5" height="8" viewBox="0 0 5 8"><path d="M0.4 0.6 L4 3.8 L0.4 7 Z" fill="#444"/></svg>
<svg class="b" style="left:8px;top:578.5px;" width="5" height="8" viewBox="0 0 5 8"><path d="M0.4 0.6 L4 3.8 L0.4 7 Z" fill="#444"/></svg>
<svg class="b" style="left:8px;top:600.5px;" width="5" height="8" viewBox="0 0 5 8"><path d="M0.4 0.6 L4 3.8 L0.4 7 Z" fill="#444"/></svg>
<svg class="b" style="left:23px;top:221px;" width="19" height="17" viewBox="0 0 19 17"><path d="M1 1 H6 L7.5 3 H18 V16 H1 Z" fill="#d7d7d2" stroke="#a4a49a" stroke-width="1"/><rect x="2.5" y="4.5" width="14" height="10.5" fill="#f4f4f8" stroke="#b8b8b0" stroke-width="0.6"/><circle cx="10" cy="10" r="4" fill="#fff" stroke="#222" stroke-width="1.1"/><path d="M10 7.5 V10 H12.3" stroke="#222" stroke-width="0.9" fill="none"/><path d="M3 10 L6.5 7 V13 Z" fill="#2f79b5"/></svg>
<svg class="b" style="left:23px;top:243px;" width="19" height="17" viewBox="0 0 19 17"><path d="M1 1 H6 L7.5 3 H18 V16 H1 Z" fill="#d7d7d2" stroke="#a4a49a" stroke-width="1"/><rect x="2.5" y="4.5" width="14" height="10.5" fill="#f4f4f8" stroke="#b8b8b0" stroke-width="0.6"/><path d="M5 13 A5.2 5.2 0 0 1 15 13" fill="#fff" stroke="#999" stroke-width="0.9"/><path d="M10 13 L13 7.5" stroke="#222" stroke-width="1"/><circle cx="13.8" cy="12.2" r="1.2" fill="#c22"/></svg>
<svg class="b" style="left:23px;top:265px;" width="19" height="17" viewBox="0 0 19 17"><path d="M1 1 H6 L7.5 3 H18 V16 H1 Z" fill="#d7d7d2" stroke="#a4a49a" stroke-width="1"/><rect x="2.5" y="4.5" width="14" height="10.5" fill="#f4f4f8" stroke="#b8b8b0" stroke-width="0.6"/></svg>
<span class="t" style="left:26.5px;top:267.5px;font-size:14px;font-weight:700;color:#2a6f97;line-height:16px;">A</span>
<svg class="b" style="left:23px;top:287px;" width="19" height="17" viewBox="0 0 19 17"><path d="M1 1 H6 L7.5 3 H18 V16 H1 Z" fill="#d7d7d2" stroke="#a4a49a" stroke-width="1"/><rect x="2.5" y="4.5" width="14" height="10.5" fill="#f4f4f8" stroke="#b8b8b0" stroke-width="0.6"/></svg>
<span class="t" style="left:27px;top:289px;font-size:14px;font-weight:700;color:#111;line-height:16px;font-family:'Liberation Serif','DejaVu Serif',serif;">Σ</span>
<svg class="b" style="left:25px;top:308px;" width="14" height="19" viewBox="0 0 14 19"><path d="M1.5 4 L12 1 V12.5 L1.5 15.5 Z" fill="#f6f6f6" stroke="#a9a9a9" stroke-width="0.9"/><path d="M7 2.5 V18" stroke="#b5b5b5" stroke-width="0.7" stroke-dasharray="2 1"/></svg>
<svg class="b" style="left:25px;top:330px;" width="14" height="19" viewBox="0 0 14 19"><path d="M1.5 4 L12 1 V12.5 L1.5 15.5 Z" fill="#f6f6f6" stroke="#a9a9a9" stroke-width="0.9"/><path d="M7 2.5 V18" stroke="#b5b5b5" stroke-width="0.7" stroke-dasharray="2 1"/></svg>
<svg class="b" style="left:25px;top:352px;" width="14" height="19" viewBox="0 0 14 19"><path d="M1.5 4 L12 1 V12.5 L1.5 15.5 Z" fill="#f6f6f6" stroke="#a9a9a9" stroke-width="0.9"/><path d="M7 2.5 V18" stroke="#b5b5b5" stroke-width="0.7" stroke-dasharray="2 1"/></svg>
<svg class="b" style="left:23px;top:374px;" width="19" height="19" viewBox="0 0 19 19"><path d="M3.5 15.5 V3 M3.5 15.5 H16" stroke="#111" stroke-width="1.2"/><path d="M3.5 0.5 L1.3 4.5 H5.7 Z M18.5 15.5 L14.5 13.3 V17.7 Z" fill="#111"/><rect x="2" y="14" width="3" height="3" fill="#111"/></svg>
<svg class="b" style="left:23px;top:396px;" width="19" height="19" viewBox="0 0 19 19"><path d="M1 6 L8 2 L18 6 L11 10.5 Z" fill="#9dc6d6" stroke="#5b93a8" stroke-width="0.7"/><path d="M3 4.9 L13 9.2 M5.5 3.4 L15.5 7.5" stroke="#6a7f88" stroke-width="0.8"/><path d="M2 7 V14 M6.5 9 V17 M11 10.5 V18 M16.5 7.5 V13.5" stroke="#5aa3bf" stroke-width="1.8"/></svg>
<svg class="b" style="left:23px;top:419px;" width="19" height="17" viewBox="0 0 19 17"><path d="M1 1 H6.5 L8 3 H18 V16 H1 Z" fill="#5fa9c6" stroke="#3a86a5" stroke-width="0.9"/><path d="M1 5 H18 V16 H1 Z" fill="#6cb5d1"/></svg>
<svg class="b" style="left:24px;top:441px;" width="18" height="17" viewBox="0 0 18 17"><path d="M1 7.5 L5 4 L9.5 5.5 V8.5 L13 7.5 L17 10.5 V13.5 L10 16.5 L1 12 Z" fill="#ecd040" stroke="#a88d12" stroke-width="0.7"/><path d="M5 1.8 L9.5 3 V8.5 L5 7.2 Z" fill="#e2c22c" stroke="#a88d12" stroke-width="0.6"/><path d="M5 1.8 L8 1 L12.5 2.2 L9.5 3 Z" fill="#f4e27a" stroke="#a88d12" stroke-width="0.6"/><path d="M9.5 3 L12.5 2.2 V7.6 L9.5 8.5 Z" fill="#d2b01c" stroke="#a88d12" stroke-width="0.6"/><path d="M1 7.5 L10 11.5 L17 10.5 M10 11.5 V16.5" fill="none" stroke="#a88d12" stroke-width="0.6"/><path d="M1 7.5 L10 11.5 V16.5 L1 12 Z" fill="#d8b822"/></svg>
<svg class="b" style="left:24px;top:463px;" width="18" height="17" viewBox="0 0 18 17"><path d="M1 7.5 L5 4 L9.5 5.5 V8.5 L13 7.5 L17 10.5 V13.5 L10 16.5 L1 12 Z" fill="#ecd040" stroke="#a88d12" stroke-width="0.7"/><path d="M5 1.8 L9.5 3 V8.5 L5 7.2 Z" fill="#e2c22c" stroke="#a88d12" stroke-width="0.6"/><path d="M5 1.8 L8 1 L12.5 2.2 L9.5 3 Z" fill="#f4e27a" stroke="#a88d12" stroke-width="0.6"/><path d="M9.5 3 L12.5 2.2 V7.6 L9.5 8.5 Z" fill="#d2b01c" stroke="#a88d12" stroke-width="0.6"/><path d="M1 7.5 L10 11.5 L17 10.5 M10 11.5 V16.5" fill="none" stroke="#a88d12" stroke-width="0.6"/><path d="M1 7.5 L10 11.5 V16.5 L1 12 Z" fill="#d8b822"/></svg>
<svg class="b" style="left:24px;top:485px;" width="18" height="17" viewBox="0 0 18 17"><path d="M1 7.5 L5 4 L9.5 5.5 V8.5 L13 7.5 L17 10.5 V13.5 L10 16.5 L1 12 Z" fill="#ecd040" stroke="#a88d12" stroke-width="0.7"/><path d="M5 1.8 L9.5 3 V8.5 L5 7.2 Z" fill="#e2c22c" stroke="#a88d12" stroke-width="0.6"/><path d="M5 1.8 L8 1 L12.5 2.2 L9.5 3 Z" fill="#f4e27a" stroke="#a88d12" stroke-width="0.6"/><path d="M9.5 3 L12.5 2.2 V7.6 L9.5 8.5 Z" fill="#d2b01c" stroke="#a88d12" stroke-width="0.6"/><path d="M1 7.5 L10 11.5 L17 10.5 M10 11.5 V16.5" fill="none" stroke="#a88d12" stroke-width="0.6"/><path d="M1 7.5 L10 11.5 V16.5 L1 12 Z" fill="#d8b822"/></svg>
<svg class="b" style="left:24px;top:507px;" width="18" height="17" viewBox="0 0 18 17"><path d="M1 7.5 L5 4 L9.5 5.5 V8.5 L13 7.5 L17 10.5 V13.5 L10 16.5 L1 12 Z" fill="#ecd040" stroke="#a88d12" stroke-width="0.7"/><path d="M5 1.8 L9.5 3 V8.5 L5 7.2 Z" fill="#e2c22c" stroke="#a88d12" stroke-width="0.6"/><path d="M5 1.8 L8 1 L12.5 2.2 L9.5 3 Z" fill="#f4e27a" stroke="#a88d12" stroke-width="0.6"/><path d="M9.5 3 L12.5 2.2 V7.6 L9.5 8.5 Z" fill="#d2b01c" stroke="#a88d12" stroke-width="0.6"/><path d="M1 7.5 L10 11.5 L17 10.5 M10 11.5 V16.5" fill="none" stroke="#a88d12" stroke-width="0.6"/><path d="M1 7.5 L10 11.5 V16.5 L1 12 Z" fill="#d8b822"/></svg>
<svg class="b" style="left:24px;top:529px;" width="18" height="17" viewBox="0 0 18 17"><path d="M1 7.5 L5 4 L9.5 5.5 V8.5 L13 7.5 L17 10.5 V13.5 L10 16.5 L1 12 Z" fill="#ecd040" stroke="#a88d12" stroke-width="0.7"/><path d="M5 1.8 L9.5 3 V8.5 L5 7.2 Z" fill="#e2c22c" stroke="#a88d12" stroke-width="0.6"/><path d="M5 1.8 L8 1 L12.5 2.2 L9.5 3 Z" fill="#f4e27a" stroke="#a88d12" stroke-width="0.6"/><path d="M9.5 3 L12.5 2.2 V7.6 L9.5 8.5 Z" fill="#d2b01c" stroke="#a88d12" stroke-width="0.6"/><path d="M1 7.5 L10 11.5 L17 10.5 M10 11.5 V16.5" fill="none" stroke="#a88d12" stroke-width="0.6"/><path d="M1 7.5 L10 11.5 V16.5 L1 12 Z" fill="#d8b822"/></svg>
<svg class="b" style="left:24px;top:551px;" width="18" height="17" viewBox="0 0 18 17"><path d="M1 7.5 L5 4 L9.5 5.5 V8.5 L13 7.5 L17 10.5 V13.5 L10 16.5 L1 12 Z" fill="#ecd040" stroke="#a88d12" stroke-width="0.7"/><path d="M5 1.8 L9.5 3 V8.5 L5 7.2 Z" fill="#e2c22c" stroke="#a88d12" stroke-width="0.6"/><path d="M5 1.8 L8 1 L12.5 2.2 L9.5 3 Z" fill="#f4e27a" stroke="#a88d12" stroke-width="0.6"/><path d="M9.5 3 L12.5 2.2 V7.6 L9.5 8.5 Z" fill="#d2b01c" stroke="#a88d12" stroke-width="0.6"/><path d="M1 7.5 L10 11.5 L17 10.5 M10 11.5 V16.5" fill="none" stroke="#a88d12" stroke-width="0.6"/><path d="M1 7.5 L10 11.5 V16.5 L1 12 Z" fill="#d8b822"/></svg>
<svg class="b" style="left:24px;top:572.5px;" width="17.34" height="17.34" viewBox="0 0 17 17"><path d="M1 8 L4.5 5 L8 6.5 L8 9 L13 7.5 L16 10 L16 13 L9 16 L1 12 Z" fill="#e8c933" stroke="#a58a12" stroke-width="0.7"/><path d="M1 8 L9 11.5 L16 9.8 M9 11.5 V16" fill="none" stroke="#a58a12" stroke-width="0.6"/><path d="M1 8 L9 11.5 V16 L1 12 Z" fill="#d4b21e"/><path d="M6 2.5 L11 1 L14.5 2.8 V8.5 L9.5 10.3 L6 8.2 Z" fill="#7fc0dc" stroke="#3f86a6" stroke-width="0.7"/><path d="M6 2.5 L9.5 4.4 L14.5 2.8 M9.5 4.4 V10.3" fill="none" stroke="#3f86a6" stroke-width="0.6"/><path d="M6 2.5 L9.5 4.4 V10.3 L6 8.2 Z" fill="#5aa6c8"/></svg>
<svg class="b" style="left:24px;top:595px;" width="17" height="18" viewBox="0 0 17 18"><path d="M3 12 V4.5 A2.2 2.2 0 0 1 7.4 4.5 V13" fill="none" stroke="#79b3d0" stroke-width="1.5"/><path d="M10 14 V6.5 A2.2 2.2 0 0 1 14.4 6.5 V15 A1.6 1.6 0 0 1 11.2 15 V8" fill="none" stroke="#8e9aa3" stroke-width="1.3"/><path d="M3 12 A1.6 1.6 0 0 0 6.2 12 V6" fill="none" stroke="#79b3d0" stroke-width="1.2"/></svg>
<svg class="b" style="left:24px;top:617px;" width="16" height="18" viewBox="0 0 16 18"><rect x="1" y="1" width="13.5" height="15.5" fill="#dcdcdc" stroke="#9a9a9a" stroke-width="0.9"/><rect x="3.5" y="3" width="9" height="12" fill="#2f7f9b"/><rect x="3.5" y="3" width="3.5" height="12" fill="#69b2cc"/></svg>
<svg class="b" style="left:759px;top:108px;" width="19" height="19" viewBox="0 0 19 19"><path d="M2 17 L8 10.5" stroke="#4f93b3" stroke-width="3" stroke-linecap="round"/><path d="M6.8 11.8 L8.2 10.2" stroke="#555" stroke-width="2.4"/><circle cx="11.5" cy="7" r="5.6" fill="#f7f8fb" stroke="#9a9a92" stroke-width="1.1"/><path d="M11.5 3.3 L10 5 H13 Z M11.5 10.7 L10 9 H13 Z M7.8 7 L9.5 5.5 V8.5 Z M15.2 7 L13.5 5.5 V8.5 Z" fill="#555"/></svg>
<svg class="b" style="left:782px;top:108px;" width="19" height="19" viewBox="0 0 19 19"><path d="M2 17 L8 10.5" stroke="#4f93b3" stroke-width="3" stroke-linecap="round"/><path d="M6.8 11.8 L8.2 10.2" stroke="#555" stroke-width="2.4"/><circle cx="11.5" cy="7" r="5.6" fill="#f7f8fb" stroke="#9a9a92" stroke-width="1.1"/><rect x="7.5" y="2" width="10" height="10" fill="none" stroke="#b8b8b0" stroke-width="0.8" stroke-dasharray="1.5 1"/></svg>
<svg class="b" style="left:805px;top:108px;" width="20" height="20" viewBox="0 0 20 20"><path d="M1 12 L13.5 2 L18 7 L5 17.5 Z" fill="#f2f2f2" stroke="#a9a99f" stroke-width="1"/><path d="M13.5 2 C15 1 18.5 4.5 18 7" fill="#e3e3d8" stroke="#a9a99f" stroke-width="0.8"/><path d="M1 12 C0.5 14 3 17.5 5 17.5" fill="none" stroke="#a9a99f" stroke-width="0.9"/><path d="M9.5 9.5 L12 13 H18 V15 H12 L11 17" fill="none" stroke="#4f93b3" stroke-width="2"/></svg>
<svg class="b" style="left:828px;top:108px;" width="20" height="20" viewBox="0 0 20 20"><path d="M1.5 8 L7 3.5 V14 L1.5 18 Z" fill="#3d8aa8" stroke="#2c6d88" stroke-width="0.7"/><path d="M7 3.5 C10 1.5 13 1.8 14.5 3.5 L14.5 14 L9.5 16 L7 14 Z" fill="#e9eaf4" stroke="#a9a99f" stroke-width="0.8"/><path d="M14.5 4 L18.5 3 V13.5 L14.5 15 Z" fill="#4a93b2" stroke="#2c6d88" stroke-width="0.7"/><path d="M1.5 8 L7 5 M7 3.5 L1.5 8" stroke="#2c6d88" stroke-width="0.5"/><path d="M2 17.5 L7 14 L9.5 16" fill="none" stroke="#2c6d88" stroke-width="0.8"/></svg>
<svg class="b" style="left:851px;top:108px;" width="20" height="20" viewBox="0 0 20 20"><path d="M9 1 L3 8.5 H6.5 L2.5 14 L11 6.5 H7.5 L11.5 1 Z" fill="#f0a91f" stroke="#c98512" stroke-width="0.5"/><path d="M6 15.5 L16 2.5 L18 4.5 L8.5 17.5 Z" fill="#f3f3ee" stroke="#a9a99f" stroke-width="0.8"/><path d="M11 18.5 L14.3 8 L18.5 18.5 H16.3 L15.4 16 H13 L12.6 18.5 Z" fill="#4f93b3"/></svg>
<svg class="b" style="left:874px;top:108px;" width="20" height="20" viewBox="0 0 20 20"><path d="M1.5 6 L6 1.5 H18.5 V14 L14 18.5 H1.5 Z" fill="#f8f8fb" stroke="#a9a99f" stroke-width="0.9"/><rect x="1.5" y="6" width="12.5" height="12.5" fill="#8cc4dc" stroke="#5b9ab5" stroke-width="0.8"/><path d="M14 6 L18.5 1.5 M14 6 H1.5" stroke="#a9a99f" stroke-width="0.8"/><path d="M10 2.2 V5 M8.8 3.8 L10 5.2 L11.2 3.8" stroke="#333" stroke-width="0.8" fill="none"/><path d="M15 10 H18" stroke="#777" stroke-width="1"/></svg>
<svg class="b" style="left:897.5px;top:116.5px;" width="6" height="4" viewBox="0 0 6 4"><path d="M0.3 0.3 H5.7 L3 3.3 Z" fill="#8a8a80"/></svg>
<svg class="b" style="left:908px;top:108px;" width="19" height="20" viewBox="0 0 19 20"><path d="M1.5 5 L9 1.5 L17 4.5 V14 L8.5 18.5 L1.5 14.5 Z" fill="#eef3f6" stroke="#a3b4bc" stroke-width="0.8"/><path d="M1.5 5 L8.5 8 V18.5 L1.5 14.5 Z" fill="#8fc7de"/><path d="M8.5 8 L17 4.5 V14 L8.5 18.5 Z" fill="#e6ebf0"/><path d="M8.5 8 L12 6.6 V16.6 L8.5 18.5 Z" fill="#b4dceb"/><path d="M1.5 5 L8.5 8 L17 4.5 M8.5 8 V18.5" fill="none" stroke="#7eaec2" stroke-width="0.7"/></svg>
<svg class="b" style="left:930.5px;top:116.5px;" width="6" height="4" viewBox="0 0 6 4"><path d="M0.3 0.3 H5.7 L3 3.3 Z" fill="#8a8a80"/></svg>
<svg class="b" style="left:940px;top:109px;" width="21" height="18" viewBox="0 0 21 18"><path d="M1 9 C5 2.5 15.5 2.5 19.5 9 C15.5 15.5 5 15.5 1 9 Z" fill="#f4f4f4" stroke="#a9a99f" stroke-width="1"/><circle cx="10.2" cy="8" r="4.3" fill="#2b2b2b"/><circle cx="11.4" cy="6.8" r="1.4" fill="#c9c9c9"/><path d="M10.2 12 V16.5" stroke="#8a8a80" stroke-width="1"/></svg>
<svg class="b" style="left:963.5px;top:116.5px;" width="6" height="4" viewBox="0 0 6 4"><path d="M0.3 0.3 H5.7 L3 3.3 Z" fill="#8a8a80"/></svg>
<svg class="b" style="left:973px;top:108px;" width="21" height="21" viewBox="0 0 21 21"><circle cx="9.5" cy="10" r="8.8" fill="#3c78c8"/><path d="M9.5 10 V1.2 A8.8 8.8 0 0 1 18.3 10 Z" fill="#d3303c"/><path d="M9.5 10 H18.3 A8.8 8.8 0 0 1 9.5 18.8 Z" fill="#e7c53a"/><path d="M9.5 10 V18.8 A8.8 8.8 0 0 1 0.7 10 Z" fill="#35b244"/><circle cx="6.42" cy="6.48" r="3.08" fill="#fff" opacity="0.35"/><circle cx="9.5" cy="10" r="8.8" fill="none" stroke="#6e6e6e" stroke-width="0.6" opacity="0.6"/><path d="M12 14 L18 7.5 L19.5 9 L13.5 15.5 L11.5 16 Z" fill="#e9d9a0" stroke="#8a6a2a" stroke-width="0.5"/><circle cx="18.8" cy="8" r="1.1" fill="#b23a2e"/></svg>
<svg class="b" style="left:996px;top:108px;" width="21" height="21" viewBox="0 0 21 21"><rect x="1" y="10" width="18" height="9.5" fill="#f5f5f5"/><path d="M1 10 h3.6 v3.2 h-3.6 Z M8.2 10 h3.6 v3.2 h-3.6 Z M15.4 10 h3.6 v3.2 h-3.6 Z M4.6 13.2 h3.6 v3.2 h-3.6 Z M11.8 13.2 h3.6 v3.2 h-3.6 Z M1 16.4 h3.6 v3.1 h-3.6 Z M8.2 16.4 h3.6 v3.1 h-3.6 Z M15.4 16.4 h3.6 v3.1 h-3.6 Z" fill="#2e2e2e"/><circle cx="10" cy="8.5" r="7.2" fill="#3c78c8"/><path d="M10 8.5 V1.3 A7.2 7.2 0 0 1 17.2 8.5 Z" fill="#d3303c"/><path d="M10 8.5 H17.2 A7.2 7.2 0 0 1 10 15.7 Z" fill="#e7c53a"/><path d="M10 8.5 V15.7 A7.2 7.2 0 0 1 2.8 8.5 Z" fill="#35b244"/><circle cx="7.48" cy="5.62" r="2.52" fill="#fff" opacity="0.35"/><circle cx="10" cy="8.5" r="7.2" fill="none" stroke="#6e6e6e" stroke-width="0.6" opacity="0.6"/></svg>
<svg class="b" style="left:1019.5px;top:116.5px;" width="6" height="4" viewBox="0 0 6 4"><path d="M0.3 0.3 H5.7 L3 3.3 Z" fill="#8a8a80"/></svg>
<svg class="b" style="left:1030px;top:110px;" width="19" height="18" viewBox="0 0 19 18"><rect x="1" y="1" width="16" height="11" fill="#e2e3ee" stroke="#8e8e86" stroke-width="1.1"/><path d="M9 12 V15 M5.5 15.5 H12.5" stroke="#555" stroke-width="1.2"/></svg>
<svg class="b" style="left:1052.5px;top:116.5px;" width="6" height="4" viewBox="0 0 6 4"><path d="M0.3 0.3 H5.7 L3 3.3 Z" fill="#8a8a80"/></svg>
<svg class="b" style="left:1473px;top:111px;" width="15" height="15" viewBox="0 0 15 15"><rect x="1" y="1" width="12.5" height="12.5" fill="none" stroke="#a3a39a" stroke-width="0.9" stroke-dasharray="1.2 0.8"/><path d="M1 1.6 H13.5" stroke="#777" stroke-width="1.4"/><path d="M2.2 7.2 L4.8 5.4 V9 Z" fill="#666"/></svg>
<svg class="b" style="left:1496px;top:111px;" width="15" height="15" viewBox="0 0 15 15"><rect x="1" y="1" width="12.5" height="12.5" fill="none" stroke="#a3a39a" stroke-width="0.9" stroke-dasharray="1.2 0.8"/><path d="M1 1.6 H13.5" stroke="#777" stroke-width="1.4"/><path d="M12.3 7.2 L9.7 5.4 V9 Z" fill="#666"/></svg>
<div class="b" style="left:1520px;top:122.5px;width:13px;height:1.5px;background:#8d8d85;"></div>
<svg class="b" style="left:1541px;top:111px;" width="17" height="15" viewBox="0 0 17 15"><rect x="6.5" y="1.5" width="9" height="7" fill="none" stroke="#a3a39a" stroke-width="0.9"/><rect x="1.5" y="6.5" width="9" height="7" fill="#fefefe" stroke="#a3a39a" stroke-width="0.9"/><path d="M6.5 1.8 H15.5 M1.5 6.8 H10.5" stroke="#888" stroke-width="1.2"/></svg>
<svg class="b" style="left:1565px;top:111px;" width="15" height="15" viewBox="0 0 15 15"><path d="M1.5 1.5 L13 13 M13 1.5 L1.5 13" stroke="#9b9b8f" stroke-width="1.2"/></svg>
<div class="b" style="left:1588px;top:126px;width:332px;height:2px;background:#6f6f6f;"></div>
<svg class="b" style="left:1596px;top:112px;" width="12" height="10" viewBox="0 0 12 10"><path d="M5 1 L1.2 5 L5 9 M10 1 L6.2 5 L10 9" fill="none" stroke="#111" stroke-width="1.3"/></svg>
<svg class="b" style="left:1877px;top:107px;" width="20" height="20" viewBox="0 0 20 20"><path d="M15.87 8.18 L18.18 8.60 L18.18 11.40 L15.87 11.82 L15.43 12.87 L16.78 14.79 L14.79 16.78 L12.87 15.43 L11.82 15.87 L11.40 18.18 L8.60 18.18 L8.18 15.87 L7.13 15.43 L5.21 16.78 L3.22 14.79 L4.57 12.87 L4.13 11.82 L1.82 11.40 L1.82 8.60 L4.13 8.18 L4.57 7.13 L3.22 5.21 L5.21 3.22 L7.13 4.57 L8.18 4.13 L8.60 1.82 L11.40 1.82 L11.82 4.13 L12.87 4.57 L14.79 3.22 L16.78 5.21 L15.43 7.13 Z" fill="#f4f4f4" stroke="#8d8d85" stroke-width="0.9" stroke-linejoin="round"/><circle cx="10" cy="10" r="2.988" fill="#fbfbfb" stroke="#8d8d85" stroke-width="0.9"/></svg>
<svg class="b" style="left:1899px;top:109px;" width="16" height="16" viewBox="0 0 16 16"><path d="M9 1 L15 7 L13.5 7.6 L11 6.6 L8 9.6 L8.6 12.6 L7.4 13.6 L2.4 8.6 L3.4 7.4 L6.4 8 L9.4 5 L8.4 2.5 Z" fill="#1a1a1a"/><path d="M5 11 L1 15" stroke="#1a1a1a" stroke-width="1.3"/></svg>
<svg class="b" style="left:1593px;top:131px;" width="16" height="17" viewBox="0 0 16 17"><path d="M1.5 2 H10.5 L13.5 4 V15 H4.5 L1.5 13 Z" fill="#ebebf2" stroke="#a9a99f" stroke-width="0.9"/><path d="M9 2.5 V13.5 M10.8 3.2 V14.2" stroke="#a9a99f" stroke-width="0.7"/></svg>
<div class="b" style="left:1609.5px;top:130px;width:18px;height:18px;background:#c3c3c0;border:1px solid #a4a4a4;box-sizing:border-box;"></div>
<svg class="b" style="left:1612px;top:132px;" width="14" height="15" viewBox="0 0 14 15"><rect x="1" y="1" width="11.5" height="12.5" fill="#dedede" stroke="#9d9d9d" stroke-width="0.7"/><rect x="3.2" y="2.8" width="7.3" height="9.6" fill="#2b86a0"/><rect x="3.2" y="2.8" width="2.6" height="9.6" fill="#6bb6cf"/></svg>
<svg class="b" style="left:1628.5px;top:135px;" width="17" height="11" viewBox="0 0 17 11"><path d="M1 2.5 L3 1 H14.5 L15.5 2.5 V8.5 L14.5 10 H3 L1 8 Z" fill="#f3f3f6" stroke="#a9a99f" stroke-width="0.8"/><rect x="3.2" y="2.6" width="12" height="6.6" fill="#f4f4f8"/></svg>
<svg class="b" style="left:1646.5px;top:135px;" width="17" height="11" viewBox="0 0 17 11"><path d="M1 2.5 L3 1 H14.5 L15.5 2.5 V8.5 L14.5 10 H3 L1 8 Z" fill="#f3f3f6" stroke="#a9a99f" stroke-width="0.8"/><rect x="3.2" y="2.6" width="12" height="6.6" fill="#2f87a3"/></svg>
<svg class="b" style="left:1664.5px;top:135px;" width="17" height="11" viewBox="0 0 17 11"><path d="M1 2.5 L3 1 H14.5 L15.5 2.5 V8.5 L14.5 10 H3 L1 8 Z" fill="#f3f3f6" stroke="#a9a99f" stroke-width="0.8"/><rect x="3.2" y="2.6" width="12" height="6.6" fill="#3f90aa"/></svg>
<svg class="b" style="left:1682px;top:130px;" width="16" height="18" viewBox="0 0 16 18"><path d="M2 1.5 H5.5 V12.5 H14.5 V16.5 H2 Z" fill="#fafafa" stroke="#a9a99f" stroke-width="0.9"/><rect x="5" y="13.4" width="7" height="1.8" fill="#1f6f8f"/></svg>
<svg class="b" style="left:1703px;top:131px;" width="16" height="17" viewBox="0 0 16 17"><path d="M1.5 2.5 C4 0.8 11 0.8 14 2.5 V5 C11 6.5 4 6.5 1.5 5 Z" fill="#e8e8e4" stroke="#8e8e86" stroke-width="0.8"/><path d="M1.5 6.5 H14 V10.5 H1.5 Z" fill="#3a8eab" stroke="#2a6f8a" stroke-width="0.6"/><path d="M1.5 11.5 H14 V15.5 H1.5 Z" fill="#e0b535" stroke="#b48a1a" stroke-width="0.6"/></svg>
<svg class="b" style="left:1900px;top:131px;" width="17" height="17" viewBox="0 0 17 17"><circle cx="8.5" cy="8.5" r="7" fill="#f7f9fc" stroke="#8fa3b8" stroke-width="1"/></svg>
<span class="t" style="left:1905.3px;top:132px;font-size:11px;font-weight:700;color:#3f6f9f;">?</span>
<svg class="b" style="left:1594px;top:150px;" width="16" height="17" viewBox="0 0 16 17"><path d="M1 2.2 C1 0.6 13.5 0.6 13.5 2.2 L8.8 8.5 V14 L5.8 15.8 V8.5 Z" fill="#f3f6f8" stroke="#a9b4b8" stroke-width="0.8"/><path d="M1.2 1.6 H13.3 V3.8 H1.2 Z" fill="#3b90ad"/></svg>
<svg class="b" style="left:1906px;top:172px;" width="9" height="6" viewBox="0 0 9 6"><path d="M1 5 L4.5 1.5 L8 5" fill="none" stroke="#555" stroke-width="1.2"/></svg>
<svg class="b" style="left:1906px;top:730px;" width="9" height="6" viewBox="0 0 9 6"><path d="M1 1 L4.5 4.5 L8 1" fill="none" stroke="#555" stroke-width="1.2"/></svg>
<svg class="b" style="left:1564px;top:156.5px;" width="19" height="19" viewBox="0 0 19 19"><circle cx="9.5" cy="9.5" r="8.6" fill="#123f5e"/><circle cx="9.5" cy="9.5" r="8.6" fill="none" stroke="#0c2c44" stroke-width="0.8"/><path d="M2.5 6.5 A8 8 0 0 1 16.5 6.5 L13 8 A4 4 0 0 0 6 8 Z" fill="#3f86a8" opacity="0.9"/><path d="M7.8 7.2 L12.5 9.5 L7.8 11.8 Z" fill="#cfe2ea"/><path d="M3.5 9.5 L5.5 8.3 V10.7 Z M15.5 9.5 L13.5 8.3 V10.7 Z" fill="#9fc1cf"/><path d="M7 14.5 H12" stroke="#cfe2ea" stroke-width="1.2"/></svg>
<svg class="b" style="left:1564px;top:180.5px;" width="20" height="19" viewBox="0 0 20 19"><path d="M3.5 9.5 H15.5 V17 H3.5 Z" fill="#f3f3f7" stroke="#a9a99f" stroke-width="0.9"/><path d="M3.5 9.5 L9.5 4 L15.5 9.5 Z" fill="#f3f3f7"/><path d="M8.2 11.5 H11.3 V14.5 H8.2 Z" fill="#e1e1e1" stroke="#8a8a8a" stroke-width="0.6"/><circle cx="10.4" cy="13.2" r="0.6" fill="#222"/><path d="M1.5 10 L9.5 2.5 L17.5 10" fill="none" stroke="#2f7f98" stroke-width="2.2"/></svg>
<svg class="b" style="left:1564px;top:203.5px;" width="20" height="20" viewBox="0 0 20 20"><path d="M2.5 4.5 L6 2 L8.5 3.5 L12 1.5 L16.5 4.5 V15 L12.5 18.5 L8.5 16.5 L6 18 L2.5 15.5 Z" fill="#f1f1f4" stroke="#8e8e86" stroke-width="0.9"/><path d="M6 6 V18 M8.5 3.5 V16.5 M12.5 6.5 V18.5 M2.5 4.5 L6 6 L8.5 4.6 M8.5 5 L12.5 6.5 L16.5 4.5" fill="none" stroke="#8e8e86" stroke-width="0.8"/></svg>
<svg class="b" style="left:1563px;top:228.5px;" width="22" height="18" viewBox="0 0 22 18"><path d="M2 2.5 H7 L8.5 4.5 H15.5 V7" fill="#e3e3de" stroke="#8e8e86" stroke-width="0.9"/><path d="M2 2.5 V16" stroke="#8e8e86" stroke-width="0.9"/><path d="M2 16 L6 7 H20 L15.5 16 Z" fill="#f6f6fa" stroke="#8e8e86" stroke-width="0.9"/></svg>
<svg class="b" style="left:1564px;top:252.5px;" width="20" height="19" viewBox="0 0 20 19"><rect x="1" y="1" width="17.5" height="16.5" fill="#ededf0" stroke="#b9b9b0" stroke-width="0.7"/><rect x="2.5" y="2.5" width="7" height="3.8" fill="#e9c22c" stroke="#b8941a" stroke-width="0.5"/><rect x="11.5" y="2.5" width="5.5" height="3.8" fill="#e9c22c" stroke="#b8941a" stroke-width="0.5"/><path d="M2.5 14 L6 8.5 L9.5 14 Z" fill="#e9c22c" stroke="#b8941a" stroke-width="0.5"/><rect x="11.5" y="9" width="5.5" height="5.5" fill="#f7f7f7" stroke="#8e8e86" stroke-width="0.5"/><path d="M11.5 9 H17 V10.8 H11.5 Z" fill="#555"/></svg>
<svg class="b" style="left:1564px;top:276px;" width="20" height="20" viewBox="0 0 20 20"><circle cx="9.5" cy="9.5" r="8.6" fill="#3c78c8"/><path d="M9.5 9.5 V0.9 A8.6 8.6 0 0 1 18.1 9.5 Z" fill="#d3303c"/><path d="M9.5 9.5 H18.1 A8.6 8.6 0 0 1 9.5 18.1 Z" fill="#e7c53a"/><path d="M9.5 9.5 V18.1 A8.6 8.6 0 0 1 0.9 9.5 Z" fill="#35b244"/><circle cx="6.49" cy="6.06" r="3.01" fill="#fff" opacity="0.35"/><circle cx="9.5" cy="9.5" r="8.6" fill="none" stroke="#6e6e6e" stroke-width="0.6" opacity="0.6"/></svg>
<svg class="b" style="left:1564px;top:300.5px;" width="20" height="19" viewBox="0 0 20 19"><rect x="1" y="1" width="17.5" height="16" fill="#f1f4f6" stroke="#7f9fae" stroke-width="0.9"/><rect x="1" y="1" width="17.5" height="2.6" fill="#5a9ec0"/><rect x="2.6" y="5" width="4.4" height="11" fill="#6fb1cf"/><path d="M8.8 7 H16.5 M8.8 10.3 H16.5 M8.8 13.6 H16.5" stroke="#333" stroke-width="1.3"/></svg>
<svg class="b" style="left:1563px;top:323.5px;" width="22" height="21" viewBox="0 0 22 21"><path d="M6.5 4 H17.5 V18.5 H6.5 Z" fill="#e5e5e5" stroke="#9d9d9d" stroke-width="0.8"/><rect x="9" y="6" width="7.5" height="11" fill="#2c87a1"/><rect x="9" y="6" width="3" height="11" fill="#6bb6cf"/><rect x="2" y="1.5" width="9" height="4.6" rx="2.2" fill="#151515" stroke="#c9a43a" stroke-width="0.7"/></svg>
<span class="t" style="left:1566.2px;top:324.9px;font-size:4px;line-height:5px;height:5px;color:#fff;font-weight:700;">SW</span>
<svg class="b" style="left:1563px;top:347.5px;" width="22" height="21" viewBox="0 0 22 21"><path d="M9 6.5 H12.5 V14 H9 Z" fill="#555"/><path d="M8.2 14 H13.3 V19.5 H8.2 Z" fill="#2f2f2f"/><path d="M16.2 3 H17.8 V19 H16.2 Z" fill="#3a3a3a"/><path d="M16.2 12 H17.8 V19 H16.2 Z" fill="#d6b12a"/><rect x="2" y="1.5" width="9" height="4.6" rx="2.2" fill="#151515" stroke="#c9a43a" stroke-width="0.7"/></svg>
<span class="t" style="left:1566.2px;top:348.9px;font-size:4px;line-height:5px;height:5px;color:#fff;font-weight:700;">SW</span>
<svg class="b" style="left:0px;top:0px;" width="1920" height="1080" viewBox="0 0 1920 1080"><path d="M1716 871.5 L1736 858.5 L1813 903 L1813 910 L1772 932 L1772 902 Z" fill="#6a8ed4"/><path d="M1716 871.5 L1736 858.5 L1738.5 860 L1720 872.5 Z" fill="#c2c2ba"/><path d="M1736 858.5 L1813 903 L1813 906.5 L1736 862 Z" fill="#2f5578"/><path d="M1736 858.5 L1813 903" stroke="#a9a99a" stroke-width="0.8"/><path d="M1772 926 L1813 903.5 L1813 910.5 L1772 933 Z" fill="#c2c2ba" stroke="#7d7d74" stroke-width="0.5"/><path d="M1772 929.5 L1813 907" stroke="#8a8a80" stroke-width="0.7"/><path d="M1790 921 l6 -3 v2.5 l-6 3 Z M1800 915.5 l5 -2.6 v2.5 l-5 2.6 Z" fill="#6f6f66"/><path d="M1772 934 L1786.5 926.5 L1812 939.5 L1812 946 L1772 969 Z" fill="#6a8ed4"/><path d="M1786.5 926.5 L1812 939.5 L1812 943 L1786.5 930 Z" fill="#2f5578"/><path d="M1772 962 L1812 939.5 L1812 946.5 L1772 969.5 Z" fill="#c2c2ba" stroke="#7d7d74" stroke-width="0.5"/><path d="M1772 965.5 L1812 943" stroke="#8a8a80" stroke-width="0.7"/><path d="M1790 957 l6 -3 v2.5 l-6 3 Z M1800 951.5 l5 -2.6 v2.5 l-5 2.6 Z" fill="#6f6f66"/><path d="M1692.2 855.6 L1772 901.8 L1772 974 L1692.2 929 Z" fill="#3f6d97"/><path d="M1692.2 893.5 L1772 939.3" stroke="#27486a" stroke-width="1"/><path d="M1772 901.8 V974" stroke="#27486a" stroke-width="1.2"/></svg>
<svg class="b" style="left:261.5px;top:951.5px;" width="52" height="60" viewBox="0 0 52 60"><path d="M11 46.5 V24" stroke="#1a1fc4" stroke-width="3.6"/><path d="M11 16.8 L6.6 25.6 H15.4 Z" fill="#2a2fd8"/><path d="M10 46 L29 49.2" stroke="#c41f28" stroke-width="3.4"/><path d="M36.2 49.6 L27.6 44.6 L26.6 53.2 Z" fill="#d02a30"/><circle cx="22" cy="40.5" r="3.5" fill="#176b22"/><path d="M13.5 44 L18.5 41" stroke="#8fd79a" stroke-width="2.2" opacity="0.8"/><path d="M9.2 46.5 h3.6 v1.6 h-3.6 Z" fill="#1a1fc4"/></svg>
<span class="t" style="left:271px;top:952px;font-size:9px;color:#2a2ad0;">Z</span>
<span class="t" style="left:289px;top:977px;font-size:9px;color:#2f9a3a;">Y</span>
<span class="t" style="left:301px;top:991px;font-size:9px;color:#d02a2a;">X</span>
<svg class="b" style="left:1400px;top:430px;" width="30" height="40" viewBox="0 0 30 40"><path d="M5.4 6.6 L5.4 31.3 L10.9 26.2 L14.6 33.2 L18.6 30.8 L15.6 24.8 L22.8 24.3 Z" fill="#2cc6f6" stroke="#0b0b16" stroke-width="1.5" stroke-linejoin="miter"/></svg>
<svg class="b" style="left:0px;top:1046px;" width="49" height="13" viewBox="0 0 49 13"><path d="M4 2 V11 M6 6.5 L10 3 V10 Z M14 6.5 L19 3 V10 Z M31 6.5 L26 3 V10 Z M44 2 V11 M42 6.5 L37 3 V10 Z" stroke="#7177a0" fill="#7a80a8" stroke-width="0.8"/></svg>
<svg class="b" style="left:1901px;top:1063px;" width="18" height="16" viewBox="0 0 18 16"><path d="M2.5 5.5 L7 1.5 L16 9.5 L11 14.5 Z" fill="#ececf4" stroke="#9a9a8c" stroke-width="1"/><path d="M6 5 L12.5 11 M8.5 3.6 L14.6 9.2" stroke="#8d8d80" stroke-width="0.8" stroke-dasharray="1.2 0.9"/></svg>
<div class="b" style="left:1887.3px;top:1070.7px;width:1.6px;height:1.4px;background:#6a6a6a;"></div>
</body></html>
